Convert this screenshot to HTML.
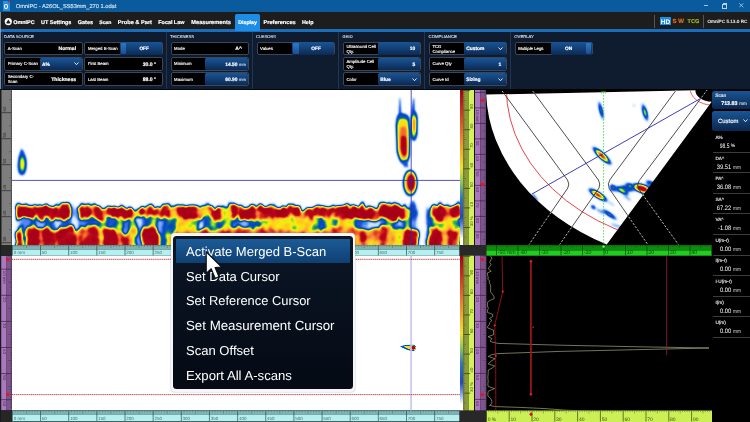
<!DOCTYPE html>
<html lang="en"><head><meta charset="utf-8"><title>OmniPC - A26OL_SS53mm_270 1.odat</title>
<style>
.t{position:absolute;white-space:nowrap;line-height:1;text-rendering:geometricPrecision;}
.f{position:absolute;background:#000;border:0.8px solid #3b4759;border-radius:2px;box-sizing:border-box}
.b{position:absolute;background:linear-gradient(#1a5596,#0b2a55);border-radius:1.5px}

html,body{margin:0;padding:0;background:#000;}
body{width:750px;height:422px;overflow:hidden;position:relative;font-family:"Liberation Sans",sans-serif;-webkit-font-smoothing:antialiased}
svg text{font-family:"Liberation Sans",sans-serif}
</style></head>
<body>
<svg style="position:absolute;left:0;top:0;text-rendering:geometricPrecision;will-change:transform" width="750" height="422" viewBox="0 0 750 422"><defs><filter id="cm1" x="0" y="190" width="480" height="70" filterUnits="userSpaceOnUse" color-interpolation-filters="sRGB"><feTurbulence type="fractalNoise" baseFrequency="0.28 0.02" numOctaves="2" seed="5" result="n"/><feColorMatrix in="n" type="matrix" values="0 0 0 0 0.5  0 1 0 0 0  0 0 1 0 0  0 0 0 0 1" result="ny"/><feDisplacementMap in="SourceGraphic" in2="ny" scale="11" xChannelSelector="R" yChannelSelector="G" result="d1"/><feTurbulence type="fractalNoise" baseFrequency="0.09 0.08" numOctaves="2" seed="23" result="nb"/><feDisplacementMap in="d1" in2="nb" scale="6" xChannelSelector="R" yChannelSelector="G"/><feGaussianBlur stdDeviation="1.55" result="bl"/><feTurbulence type="fractalNoise" baseFrequency="0.1 0.1" numOctaves="2" seed="11" result="n2"/><feColorMatrix in="n2" type="matrix" values="1 0 0 0 0  1 0 0 0 0  1 0 0 0 0  0 0 0 0 1" result="n2g"/><feComposite in="bl" in2="n2g" operator="arithmetic" k1="0.7" k2="0.68" k3="0" k4="0"/><feComponentTransfer><feFuncR type="table" tableValues="1.000 0.921 0.843 0.750 0.600 0.450 0.300 0.222 0.144 0.067 0.024 0.035 0.046 0.100 0.183 0.300 0.550 0.800 0.955 0.967 0.980 0.992 0.998 0.993 0.988 0.983 0.974 0.959 0.944 0.929 0.902 0.857 0.812 0.767 0.735 0.723 0.710 0.698 0.685 0.672 0.660"/><feFuncG type="table" tableValues="1.000 0.957 0.914 0.858 0.745 0.633 0.520 0.442 0.364 0.287 0.266 0.330 0.394 0.503 0.640 0.764 0.836 0.907 0.937 0.904 0.872 0.839 0.796 0.736 0.676 0.616 0.552 0.482 0.412 0.342 0.274 0.209 0.144 0.079 0.037 0.031 0.025 0.019 0.013 0.006 0.000"/><feFuncB type="table" tableValues="1.000 1.000 1.000 0.997 0.981 0.966 0.950 0.903 0.856 0.808 0.757 0.700 0.643 0.540 0.407 0.282 0.193 0.104 0.055 0.067 0.080 0.092 0.112 0.142 0.172 0.202 0.212 0.192 0.172 0.152 0.136 0.126 0.116 0.106 0.100 0.100 0.100 0.100 0.100 0.100 0.100"/></feComponentTransfer></filter><filter id="cm2" x="0" y="0" width="750" height="422" filterUnits="userSpaceOnUse" color-interpolation-filters="sRGB"><feGaussianBlur stdDeviation="1.2"/><feComponentTransfer><feFuncR type="table" tableValues="1.000 0.921 0.843 0.750 0.600 0.450 0.300 0.222 0.144 0.067 0.024 0.035 0.046 0.100 0.183 0.300 0.550 0.800 0.955 0.967 0.980 0.992 0.998 0.993 0.988 0.983 0.974 0.959 0.944 0.929 0.902 0.857 0.812 0.767 0.735 0.723 0.710 0.698 0.685 0.672 0.660"/><feFuncG type="table" tableValues="1.000 0.957 0.914 0.858 0.745 0.633 0.520 0.442 0.364 0.287 0.266 0.330 0.394 0.503 0.640 0.764 0.836 0.907 0.937 0.904 0.872 0.839 0.796 0.736 0.676 0.616 0.552 0.482 0.412 0.342 0.274 0.209 0.144 0.079 0.037 0.031 0.025 0.019 0.013 0.006 0.000"/><feFuncB type="table" tableValues="1.000 1.000 1.000 0.997 0.981 0.966 0.950 0.903 0.856 0.808 0.757 0.700 0.643 0.540 0.407 0.282 0.193 0.104 0.055 0.067 0.080 0.092 0.112 0.142 0.172 0.202 0.212 0.192 0.172 0.152 0.136 0.126 0.116 0.106 0.100 0.100 0.100 0.100 0.100 0.100 0.100"/></feComponentTransfer></filter><filter id="cm3" x="0" y="0" width="750" height="422" filterUnits="userSpaceOnUse" color-interpolation-filters="sRGB"><feGaussianBlur stdDeviation="0.8"/><feComponentTransfer><feFuncR type="table" tableValues="1.000 0.921 0.843 0.750 0.600 0.450 0.300 0.222 0.144 0.067 0.024 0.035 0.046 0.100 0.183 0.300 0.550 0.800 0.955 0.967 0.980 0.992 0.998 0.993 0.988 0.983 0.974 0.959 0.944 0.929 0.902 0.857 0.812 0.767 0.735 0.723 0.710 0.698 0.685 0.672 0.660"/><feFuncG type="table" tableValues="1.000 0.957 0.914 0.858 0.745 0.633 0.520 0.442 0.364 0.287 0.266 0.330 0.394 0.503 0.640 0.764 0.836 0.907 0.937 0.904 0.872 0.839 0.796 0.736 0.676 0.616 0.552 0.482 0.412 0.342 0.274 0.209 0.144 0.079 0.037 0.031 0.025 0.019 0.013 0.006 0.000"/><feFuncB type="table" tableValues="1.000 1.000 1.000 0.997 0.981 0.966 0.950 0.903 0.856 0.808 0.757 0.700 0.643 0.540 0.407 0.282 0.193 0.104 0.055 0.067 0.080 0.092 0.112 0.142 0.172 0.202 0.212 0.192 0.172 0.152 0.136 0.126 0.116 0.106 0.100 0.100 0.100 0.100 0.100 0.100 0.100"/></feComponentTransfer></filter><filter id="cm4" x="0" y="0" width="750" height="422" filterUnits="userSpaceOnUse" color-interpolation-filters="sRGB"><feGaussianBlur stdDeviation="0.55"/><feComponentTransfer><feFuncR type="table" tableValues="1.000 0.921 0.843 0.750 0.600 0.450 0.300 0.222 0.144 0.067 0.024 0.035 0.046 0.100 0.183 0.300 0.550 0.800 0.955 0.967 0.980 0.992 0.998 0.993 0.988 0.983 0.974 0.959 0.944 0.929 0.902 0.857 0.812 0.767 0.735 0.723 0.710 0.698 0.685 0.672 0.660"/><feFuncG type="table" tableValues="1.000 0.957 0.914 0.858 0.745 0.633 0.520 0.442 0.364 0.287 0.266 0.330 0.394 0.503 0.640 0.764 0.836 0.907 0.937 0.904 0.872 0.839 0.796 0.736 0.676 0.616 0.552 0.482 0.412 0.342 0.274 0.209 0.144 0.079 0.037 0.031 0.025 0.019 0.013 0.006 0.000"/><feFuncB type="table" tableValues="1.000 1.000 1.000 0.997 0.981 0.966 0.950 0.903 0.856 0.808 0.757 0.700 0.643 0.540 0.407 0.282 0.193 0.104 0.055 0.067 0.080 0.092 0.112 0.142 0.172 0.202 0.212 0.192 0.172 0.152 0.136 0.126 0.116 0.106 0.100 0.100 0.100 0.100 0.100 0.100 0.100"/></feComponentTransfer></filter><clipPath id="cpB"><rect x="12" y="90" width="448" height="155"/></clipPath><clipPath id="cpS"><path d="M486.2 94.6 L695.4 90.2 A16.3 11.5 0 0 0 711.7 101.7 L606.7 244.4 A226 175.4 0 0 1 486.2 94.6 Z"/></clipPath><clipPath id="cpSv"><rect x="486.4" y="90" width="225.6" height="155"/></clipPath><clipPath id="cpA"><rect x="486.4" y="255.7" width="225.6" height="154.7"/></clipPath><linearGradient id="cbar" x1="0" y1="0" x2="0" y2="1"><stop offset="0" stop-color="#a00018"/><stop offset="0.12" stop-color="#cf2a1c"/><stop offset="0.3" stop-color="#ee7c30"/><stop offset="0.5" stop-color="#f2e030"/><stop offset="0.6" stop-color="#86c464"/><stop offset="0.7" stop-color="#2e74c0"/><stop offset="0.82" stop-color="#2048c8"/><stop offset="0.9" stop-color="#8eacf0"/><stop offset="0.96" stop-color="#ffffff"/></linearGradient><clipPath id="cpC"><rect x="12" y="255.5" width="448" height="155"/></clipPath></defs><rect x="0" y="88.6" width="750" height="334" fill="#000"/><rect x="0" y="88.6" width="750" height="1.6" fill="#04080e"/><rect x="0" y="90" width="1" height="332" fill="#1a1a1a"/><rect x="12" y="90" width="448" height="154.6" fill="#fff"/><rect x="12" y="255.7" width="448" height="154.8" fill="#fff"/><rect x="1.4" y="90.0" width="10.3" height="155.0" fill="#7e7e7e"/><path d="M10.5 91.90H11.7M10.5 94.50H11.7M10.5 97.10H11.7M9.1 99.70H11.7M10.5 102.30H11.7M10.5 104.90H11.7M10.5 107.50H11.7M10.5 110.10H11.7M10.5 115.30H11.7M10.5 117.90H11.7M10.5 120.50H11.7M10.5 123.10H11.7M9.1 125.70H11.7M10.5 128.30H11.7M10.5 130.90H11.7M10.5 133.50H11.7M10.5 136.10H11.7M10.5 141.30H11.7M10.5 143.90H11.7M10.5 146.50H11.7M10.5 149.10H11.7M9.1 151.70H11.7M10.5 154.30H11.7M10.5 156.90H11.7M10.5 159.50H11.7M10.5 162.10H11.7M10.5 167.30H11.7M10.5 169.90H11.7M10.5 172.50H11.7M10.5 175.10H11.7M9.1 177.70H11.7M10.5 180.30H11.7M10.5 182.90H11.7M10.5 185.50H11.7M10.5 188.10H11.7M10.5 193.30H11.7M10.5 195.90H11.7M10.5 198.50H11.7M10.5 201.10H11.7M9.1 203.70H11.7M10.5 206.30H11.7M10.5 208.90H11.7M10.5 211.50H11.7M10.5 214.10H11.7M10.5 219.30H11.7M10.5 221.90H11.7M10.5 224.50H11.7M10.5 227.10H11.7M9.1 229.70H11.7M10.5 232.30H11.7M10.5 234.90H11.7M10.5 237.50H11.7M10.5 240.10H11.7" stroke="#262626" stroke-width="0.50" fill="none" opacity="0.8"/><path d="M1.7 112.70H11.4M1.7 138.70H11.4M1.7 164.70H11.4M1.7 190.70H11.4M1.7 216.70H11.4M1.7 242.70H11.4" stroke="#262626" stroke-width="0.70" fill="none"/><text x="6.0" y="111.5" font-size="4.3" fill="#3c2424" text-anchor="start" font-weight="400" transform="rotate(-90 6.0 111.5)">60</text><text x="6.0" y="137.5" font-size="4.3" fill="#3c2424" text-anchor="start" font-weight="400" transform="rotate(-90 6.0 137.5)">55</text><text x="6.0" y="163.5" font-size="4.3" fill="#3c2424" text-anchor="start" font-weight="400" transform="rotate(-90 6.0 163.5)">50</text><text x="6.0" y="189.5" font-size="4.3" fill="#3c2424" text-anchor="start" font-weight="400" transform="rotate(-90 6.0 189.5)">45</text><text x="6.0" y="215.5" font-size="4.3" fill="#3c2424" text-anchor="start" font-weight="400" transform="rotate(-90 6.0 215.5)">40</text><text x="6.0" y="241.5" font-size="4.3" fill="#3c2424" text-anchor="start" font-weight="400" transform="rotate(-90 6.0 241.5)">35</text><rect x="1.2" y="255.7" width="5.4" height="154.7" fill="#ab78bf"/><rect x="6.6" y="255.7" width="5.2" height="154.7" fill="#7d558c"/><path d="M8.6 256.15H11.8M10.2 258.76H11.8M10.2 261.37H11.8M10.2 263.98H11.8M10.2 266.59H11.8M10.2 271.81H11.8M10.2 274.42H11.8M10.2 277.03H11.8M10.2 279.64H11.8M8.6 282.25H11.8M10.2 284.86H11.8M10.2 287.47H11.8M10.2 290.08H11.8M10.2 292.69H11.8M10.2 297.91H11.8M10.2 300.52H11.8M10.2 303.13H11.8M10.2 305.74H11.8M8.6 308.35H11.8M10.2 310.96H11.8M10.2 313.57H11.8M10.2 316.18H11.8M10.2 318.79H11.8M10.2 324.01H11.8M10.2 326.62H11.8M10.2 329.23H11.8M10.2 331.84H11.8M8.6 334.45H11.8M10.2 337.06H11.8M10.2 339.67H11.8M10.2 342.28H11.8M10.2 344.89H11.8M10.2 350.11H11.8M10.2 352.72H11.8M10.2 355.33H11.8M10.2 357.94H11.8M8.6 360.55H11.8M10.2 363.16H11.8M10.2 365.77H11.8M10.2 368.38H11.8M10.2 370.99H11.8M10.2 376.21H11.8M10.2 378.82H11.8M10.2 381.43H11.8M10.2 384.04H11.8M8.6 386.65H11.8M10.2 389.26H11.8M10.2 391.87H11.8M10.2 394.48H11.8M10.2 397.09H11.8M10.2 402.31H11.8M10.2 404.92H11.8M10.2 407.53H11.8" stroke="#35203c" stroke-width="0.50" fill="none" opacity="0.8"/><path d="M1.2 269.20H11.8M1.2 295.30H11.8M1.2 321.40H11.8M1.2 347.50H11.8M1.2 373.60H11.8M1.2 399.70H11.8" stroke="#35203c" stroke-width="0.70" fill="none"/><text x="2.6" y="270.8" font-size="4.3" fill="#4a2c55" text-anchor="start" font-weight="400" transform="rotate(90 2.6 270.8)">10 mm</text><text x="2.6" y="296.9" font-size="4.3" fill="#4a2c55" text-anchor="start" font-weight="400" transform="rotate(90 2.6 296.9)">20</text><text x="2.6" y="323.0" font-size="4.3" fill="#4a2c55" text-anchor="start" font-weight="400" transform="rotate(90 2.6 323.0)">30</text><text x="2.6" y="349.1" font-size="4.3" fill="#4a2c55" text-anchor="start" font-weight="400" transform="rotate(90 2.6 349.1)">40</text><text x="2.6" y="375.2" font-size="4.3" fill="#4a2c55" text-anchor="start" font-weight="400" transform="rotate(90 2.6 375.2)">50</text><text x="2.6" y="401.3" font-size="4.3" fill="#4a2c55" text-anchor="start" font-weight="400" transform="rotate(90 2.6 401.3)">60</text><rect x="1" y="245" width="11" height="10.7" fill="#262626"/><rect x="1" y="410.4" width="11" height="11.6" fill="#262626"/><rect x="12.0" y="245.0" width="447.6" height="4.5" fill="#7fb4b4"/><rect x="12.0" y="249.5" width="447.6" height="6.2" fill="#b6efef"/><path d="M15.21 245.2V246.7M18.03 245.2V246.7M20.84 245.2V246.7M23.66 245.2V246.7M26.48 245.2V248.0M29.29 245.2V246.7M32.10 245.2V246.7M34.92 245.2V246.7M37.73 245.2V246.7M43.36 245.2V246.7M46.18 245.2V246.7M48.99 245.2V246.7M51.81 245.2V246.7M54.62 245.2V248.0M57.44 245.2V246.7M60.25 245.2V246.7M63.07 245.2V246.7M65.88 245.2V246.7M71.52 245.2V246.7M74.33 245.2V246.7M77.14 245.2V246.7M79.96 245.2V246.7M82.78 245.2V248.0M85.59 245.2V246.7M88.41 245.2V246.7M91.22 245.2V246.7M94.03 245.2V246.7M99.66 245.2V246.7M102.48 245.2V246.7M105.30 245.2V246.7M108.11 245.2V246.7M110.92 245.2V248.0M113.74 245.2V246.7M116.55 245.2V246.7M119.37 245.2V246.7M122.18 245.2V246.7M127.81 245.2V246.7M130.63 245.2V246.7M133.44 245.2V246.7M136.26 245.2V246.7M139.07 245.2V248.0M141.89 245.2V246.7M144.70 245.2V246.7M147.52 245.2V246.7M150.33 245.2V246.7M155.97 245.2V246.7M158.78 245.2V246.7M161.59 245.2V246.7M164.41 245.2V246.7M167.22 245.2V248.0M170.04 245.2V246.7M172.85 245.2V246.7M175.67 245.2V246.7M178.48 245.2V246.7M184.11 245.2V246.7M186.93 245.2V246.7M189.74 245.2V246.7M192.56 245.2V246.7M195.38 245.2V248.0M198.19 245.2V246.7M201.00 245.2V246.7M203.82 245.2V246.7M206.63 245.2V246.7M212.26 245.2V246.7M215.08 245.2V246.7M217.89 245.2V246.7M220.71 245.2V246.7M223.52 245.2V248.0M226.34 245.2V246.7M229.15 245.2V246.7M231.97 245.2V246.7M234.78 245.2V246.7M240.41 245.2V246.7M243.23 245.2V246.7M246.04 245.2V246.7M248.86 245.2V246.7M251.67 245.2V248.0M254.49 245.2V246.7M257.30 245.2V246.7M260.12 245.2V246.7M262.93 245.2V246.7M268.56 245.2V246.7M271.38 245.2V246.7M274.19 245.2V246.7M277.01 245.2V246.7M279.82 245.2V248.0M282.64 245.2V246.7M285.45 245.2V246.7M288.27 245.2V246.7M291.08 245.2V246.7M296.71 245.2V246.7M299.53 245.2V246.7M302.34 245.2V246.7M305.16 245.2V246.7M307.97 245.2V248.0M310.79 245.2V246.7M313.60 245.2V246.7M316.42 245.2V246.7M319.23 245.2V246.7M324.86 245.2V246.7M327.68 245.2V246.7M330.49 245.2V246.7M333.31 245.2V246.7M336.12 245.2V248.0M338.94 245.2V246.7M341.75 245.2V246.7M344.57 245.2V246.7M347.38 245.2V246.7M353.01 245.2V246.7M355.83 245.2V246.7M358.64 245.2V246.7M361.46 245.2V246.7M364.27 245.2V248.0M367.09 245.2V246.7M369.90 245.2V246.7M372.72 245.2V246.7M375.53 245.2V246.7M381.16 245.2V246.7M383.98 245.2V246.7M386.79 245.2V246.7M389.61 245.2V246.7M392.42 245.2V248.0M395.24 245.2V246.7M398.05 245.2V246.7M400.87 245.2V246.7M403.68 245.2V246.7M409.31 245.2V246.7M412.13 245.2V246.7M414.94 245.2V246.7M417.76 245.2V246.7M420.57 245.2V248.0M423.39 245.2V246.7M426.20 245.2V246.7M429.02 245.2V246.7M431.83 245.2V246.7M437.46 245.2V246.7M440.28 245.2V246.7M443.09 245.2V246.7M445.91 245.2V246.7M448.72 245.2V248.0M451.54 245.2V246.7M454.35 245.2V246.7M457.17 245.2V246.7" stroke="#1f4444" stroke-width="0.50" fill="none" opacity="0.75"/><path d="M12.40 245.2V255.3M40.55 245.2V255.3M68.70 245.2V255.3M96.85 245.2V255.3M125.00 245.2V255.3M153.15 245.2V255.3M181.30 245.2V255.3M209.45 245.2V255.3M237.60 245.2V255.3M265.75 245.2V255.3M293.90 245.2V255.3M322.05 245.2V255.3M350.20 245.2V255.3M378.35 245.2V255.3M406.50 245.2V255.3M434.65 245.2V255.3" stroke="#1f4444" stroke-width="0.65" fill="none"/><path d="M12.0 245.2H459.6" stroke="#1f4444" stroke-width="0.5" opacity="0.7"/><text x="13.7" y="254.3" font-size="4.5" fill="#3e7474" text-anchor="start" font-weight="400">0 mm</text><text x="41.8" y="254.3" font-size="4.5" fill="#3e7474" text-anchor="start" font-weight="400">50</text><text x="70.0" y="254.3" font-size="4.5" fill="#3e7474" text-anchor="start" font-weight="400">100</text><text x="98.1" y="254.3" font-size="4.5" fill="#3e7474" text-anchor="start" font-weight="400">150</text><text x="126.3" y="254.3" font-size="4.5" fill="#3e7474" text-anchor="start" font-weight="400">200</text><text x="154.5" y="254.3" font-size="4.5" fill="#3e7474" text-anchor="start" font-weight="400">250</text><text x="182.6" y="254.3" font-size="4.5" fill="#3e7474" text-anchor="start" font-weight="400">300</text><text x="210.8" y="254.3" font-size="4.5" fill="#3e7474" text-anchor="start" font-weight="400">350</text><text x="238.9" y="254.3" font-size="4.5" fill="#3e7474" text-anchor="start" font-weight="400">400</text><text x="267.0" y="254.3" font-size="4.5" fill="#3e7474" text-anchor="start" font-weight="400">450</text><text x="295.2" y="254.3" font-size="4.5" fill="#3e7474" text-anchor="start" font-weight="400">500</text><text x="323.3" y="254.3" font-size="4.5" fill="#3e7474" text-anchor="start" font-weight="400">550</text><text x="351.5" y="254.3" font-size="4.5" fill="#3e7474" text-anchor="start" font-weight="400">600</text><text x="379.6" y="254.3" font-size="4.5" fill="#3e7474" text-anchor="start" font-weight="400">650</text><text x="407.8" y="254.3" font-size="4.5" fill="#3e7474" text-anchor="start" font-weight="400">700</text><text x="435.9" y="254.3" font-size="4.5" fill="#3e7474" text-anchor="start" font-weight="400">750</text><rect x="459.6" y="245.0" width="26.8" height="11.3" fill="#282828"/><rect x="12.0" y="410.4" width="447.6" height="4.5" fill="#7fb4b4"/><rect x="12.0" y="414.9" width="447.6" height="6.5" fill="#b6efef"/><path d="M15.21 410.6V412.1M18.03 410.6V412.1M20.84 410.6V412.1M23.66 410.6V412.1M26.48 410.6V413.4M29.29 410.6V412.1M32.10 410.6V412.1M34.92 410.6V412.1M37.73 410.6V412.1M43.36 410.6V412.1M46.18 410.6V412.1M48.99 410.6V412.1M51.81 410.6V412.1M54.62 410.6V413.4M57.44 410.6V412.1M60.25 410.6V412.1M63.07 410.6V412.1M65.88 410.6V412.1M71.52 410.6V412.1M74.33 410.6V412.1M77.14 410.6V412.1M79.96 410.6V412.1M82.78 410.6V413.4M85.59 410.6V412.1M88.41 410.6V412.1M91.22 410.6V412.1M94.03 410.6V412.1M99.66 410.6V412.1M102.48 410.6V412.1M105.30 410.6V412.1M108.11 410.6V412.1M110.92 410.6V413.4M113.74 410.6V412.1M116.55 410.6V412.1M119.37 410.6V412.1M122.18 410.6V412.1M127.81 410.6V412.1M130.63 410.6V412.1M133.44 410.6V412.1M136.26 410.6V412.1M139.07 410.6V413.4M141.89 410.6V412.1M144.70 410.6V412.1M147.52 410.6V412.1M150.33 410.6V412.1M155.97 410.6V412.1M158.78 410.6V412.1M161.59 410.6V412.1M164.41 410.6V412.1M167.22 410.6V413.4M170.04 410.6V412.1M172.85 410.6V412.1M175.67 410.6V412.1M178.48 410.6V412.1M184.11 410.6V412.1M186.93 410.6V412.1M189.74 410.6V412.1M192.56 410.6V412.1M195.38 410.6V413.4M198.19 410.6V412.1M201.00 410.6V412.1M203.82 410.6V412.1M206.63 410.6V412.1M212.26 410.6V412.1M215.08 410.6V412.1M217.89 410.6V412.1M220.71 410.6V412.1M223.52 410.6V413.4M226.34 410.6V412.1M229.15 410.6V412.1M231.97 410.6V412.1M234.78 410.6V412.1M240.41 410.6V412.1M243.23 410.6V412.1M246.04 410.6V412.1M248.86 410.6V412.1M251.67 410.6V413.4M254.49 410.6V412.1M257.30 410.6V412.1M260.12 410.6V412.1M262.93 410.6V412.1M268.56 410.6V412.1M271.38 410.6V412.1M274.19 410.6V412.1M277.01 410.6V412.1M279.82 410.6V413.4M282.64 410.6V412.1M285.45 410.6V412.1M288.27 410.6V412.1M291.08 410.6V412.1M296.71 410.6V412.1M299.53 410.6V412.1M302.34 410.6V412.1M305.16 410.6V412.1M307.97 410.6V413.4M310.79 410.6V412.1M313.60 410.6V412.1M316.42 410.6V412.1M319.23 410.6V412.1M324.86 410.6V412.1M327.68 410.6V412.1M330.49 410.6V412.1M333.31 410.6V412.1M336.12 410.6V413.4M338.94 410.6V412.1M341.75 410.6V412.1M344.57 410.6V412.1M347.38 410.6V412.1M353.01 410.6V412.1M355.83 410.6V412.1M358.64 410.6V412.1M361.46 410.6V412.1M364.27 410.6V413.4M367.09 410.6V412.1M369.90 410.6V412.1M372.72 410.6V412.1M375.53 410.6V412.1M381.16 410.6V412.1M383.98 410.6V412.1M386.79 410.6V412.1M389.61 410.6V412.1M392.42 410.6V413.4M395.24 410.6V412.1M398.05 410.6V412.1M400.87 410.6V412.1M403.68 410.6V412.1M409.31 410.6V412.1M412.13 410.6V412.1M414.94 410.6V412.1M417.76 410.6V412.1M420.57 410.6V413.4M423.39 410.6V412.1M426.20 410.6V412.1M429.02 410.6V412.1M431.83 410.6V412.1M437.46 410.6V412.1M440.28 410.6V412.1M443.09 410.6V412.1M445.91 410.6V412.1M448.72 410.6V413.4M451.54 410.6V412.1M454.35 410.6V412.1M457.17 410.6V412.1" stroke="#1f4444" stroke-width="0.50" fill="none" opacity="0.75"/><path d="M12.40 410.6V421.0M40.55 410.6V421.0M68.70 410.6V421.0M96.85 410.6V421.0M125.00 410.6V421.0M153.15 410.6V421.0M181.30 410.6V421.0M209.45 410.6V421.0M237.60 410.6V421.0M265.75 410.6V421.0M293.90 410.6V421.0M322.05 410.6V421.0M350.20 410.6V421.0M378.35 410.6V421.0M406.50 410.6V421.0M434.65 410.6V421.0" stroke="#1f4444" stroke-width="0.65" fill="none"/><path d="M12.0 410.6H459.6" stroke="#1f4444" stroke-width="0.5" opacity="0.7"/><text x="13.7" y="420.0" font-size="4.5" fill="#3e7474" text-anchor="start" font-weight="400">0 mm</text><text x="41.8" y="420.0" font-size="4.5" fill="#3e7474" text-anchor="start" font-weight="400">50</text><text x="70.0" y="420.0" font-size="4.5" fill="#3e7474" text-anchor="start" font-weight="400">100</text><text x="98.1" y="420.0" font-size="4.5" fill="#3e7474" text-anchor="start" font-weight="400">150</text><text x="126.3" y="420.0" font-size="4.5" fill="#3e7474" text-anchor="start" font-weight="400">200</text><text x="154.5" y="420.0" font-size="4.5" fill="#3e7474" text-anchor="start" font-weight="400">250</text><text x="182.6" y="420.0" font-size="4.5" fill="#3e7474" text-anchor="start" font-weight="400">300</text><text x="210.8" y="420.0" font-size="4.5" fill="#3e7474" text-anchor="start" font-weight="400">350</text><text x="238.9" y="420.0" font-size="4.5" fill="#3e7474" text-anchor="start" font-weight="400">400</text><text x="267.0" y="420.0" font-size="4.5" fill="#3e7474" text-anchor="start" font-weight="400">450</text><text x="295.2" y="420.0" font-size="4.5" fill="#3e7474" text-anchor="start" font-weight="400">500</text><text x="323.3" y="420.0" font-size="4.5" fill="#3e7474" text-anchor="start" font-weight="400">550</text><text x="351.5" y="420.0" font-size="4.5" fill="#3e7474" text-anchor="start" font-weight="400">600</text><text x="379.6" y="420.0" font-size="4.5" fill="#3e7474" text-anchor="start" font-weight="400">650</text><text x="407.8" y="420.0" font-size="4.5" fill="#3e7474" text-anchor="start" font-weight="400">700</text><text x="435.9" y="420.0" font-size="4.5" fill="#3e7474" text-anchor="start" font-weight="400">750</text><rect x="459.6" y="410.4" width="26.8" height="11.6" fill="#282828"/><rect x="460" y="90.0" width="3.4" height="155.0" fill="url(#cbar)"/><rect x="463.2" y="90.0" width="5.5" height="155.0" fill="#8b9a3a"/><rect x="468.7" y="90.0" width="5.4" height="155.0" fill="#d5f15c"/><path d="M463.2 92.55H464.6M463.2 94.51H464.6M463.2 96.46H464.6M463.2 98.42H464.6M463.2 100.38H465.8M463.2 102.33H464.6M463.2 104.28H464.6M463.2 106.24H464.6M463.2 108.19H464.6M463.2 112.10H464.6M463.2 114.06H464.6M463.2 116.01H464.6M463.2 117.97H464.6M463.2 119.92H465.8M463.2 121.88H464.6M463.2 123.83H464.6M463.2 125.79H464.6M463.2 127.75H464.6M463.2 131.66H464.6M463.2 133.61H464.6M463.2 135.56H464.6M463.2 137.52H464.6M463.2 139.47H465.8M463.2 141.43H464.6M463.2 143.38H464.6M463.2 145.34H464.6M463.2 147.29H464.6M463.2 151.20H464.6M463.2 153.16H464.6M463.2 155.12H464.6M463.2 157.07H464.6M463.2 159.02H465.8M463.2 160.98H464.6M463.2 162.94H464.6M463.2 164.89H464.6M463.2 166.84H464.6M463.2 170.75H464.6M463.2 172.71H464.6M463.2 174.66H464.6M463.2 176.62H464.6M463.2 178.57H465.8M463.2 180.53H464.6M463.2 182.49H464.6M463.2 184.44H464.6M463.2 186.39H464.6M463.2 190.31H464.6M463.2 192.26H464.6M463.2 194.22H464.6M463.2 196.17H464.6M463.2 198.12H465.8M463.2 200.08H464.6M463.2 202.03H464.6M463.2 203.99H464.6M463.2 205.94H464.6M463.2 209.86H464.6M463.2 211.81H464.6M463.2 213.76H464.6M463.2 215.72H464.6M463.2 217.68H465.8M463.2 219.63H464.6M463.2 221.59H464.6M463.2 223.54H464.6M463.2 225.50H464.6M463.2 229.41H464.6M463.2 231.36H464.6M463.2 233.31H464.6M463.2 235.27H464.6M463.2 237.22H465.8M463.2 239.18H464.6M463.2 241.13H464.6M463.2 243.09H464.6" stroke="#2c3312" stroke-width="0.50" fill="none" opacity="0.8"/><path d="M463.2 90.60H470.2M463.2 110.15H470.2M463.2 129.70H470.2M463.2 149.25H470.2M463.2 168.80H470.2M463.2 188.35H470.2M463.2 207.90H470.2M463.2 227.45H470.2" stroke="#2c3312" stroke-width="0.70" fill="none"/><text x="473.0" y="108.9" font-size="4.3" fill="#46521c" text-anchor="start" font-weight="400" transform="rotate(-90 473.0 108.9)">90</text><text x="473.0" y="128.5" font-size="4.3" fill="#46521c" text-anchor="start" font-weight="400" transform="rotate(-90 473.0 128.5)">80</text><text x="473.0" y="148.1" font-size="4.3" fill="#46521c" text-anchor="start" font-weight="400" transform="rotate(-90 473.0 148.1)">70</text><text x="473.0" y="167.6" font-size="4.3" fill="#46521c" text-anchor="start" font-weight="400" transform="rotate(-90 473.0 167.6)">60</text><text x="473.0" y="187.2" font-size="4.3" fill="#46521c" text-anchor="start" font-weight="400" transform="rotate(-90 473.0 187.2)">50</text><text x="473.0" y="206.7" font-size="4.3" fill="#46521c" text-anchor="start" font-weight="400" transform="rotate(-90 473.0 206.7)">40</text><text x="473.0" y="226.2" font-size="4.3" fill="#46521c" text-anchor="start" font-weight="400" transform="rotate(-90 473.0 226.2)">30 %</text><rect x="474.1" y="90.0" width="0.9" height="155.0" fill="#151515"/><rect x="475.0" y="90.0" width="5.2" height="155.0" fill="#ab78bf"/><rect x="480.2" y="90.0" width="6.1" height="155.0" fill="#7d558c"/><path d="M484.7 90.85H486.3M484.7 93.95H486.3M484.7 95.50H486.3M484.7 97.05H486.3M484.7 98.60H486.3M483.3 100.15H486.3M484.7 101.70H486.3M484.7 103.25H486.3M484.7 104.80H486.3M484.7 106.35H486.3M484.7 109.45H486.3M484.7 111.00H486.3M484.7 112.55H486.3M484.7 114.10H486.3M483.3 115.65H486.3M484.7 117.20H486.3M484.7 118.75H486.3M484.7 120.30H486.3M484.7 121.85H486.3M484.7 124.95H486.3M484.7 126.50H486.3M484.7 128.05H486.3M484.7 129.60H486.3M483.3 131.15H486.3M484.7 132.70H486.3M484.7 134.25H486.3M484.7 135.80H486.3M484.7 137.35H486.3M484.7 140.45H486.3M484.7 142.00H486.3M484.7 143.55H486.3M484.7 145.10H486.3M483.3 146.65H486.3M484.7 148.20H486.3M484.7 149.75H486.3M484.7 151.30H486.3M484.7 152.85H486.3M484.7 155.95H486.3M484.7 157.50H486.3M484.7 159.05H486.3M484.7 160.60H486.3M483.3 162.15H486.3M484.7 163.70H486.3M484.7 165.25H486.3M484.7 166.80H486.3M484.7 168.35H486.3M484.7 171.45H486.3M484.7 173.00H486.3M484.7 174.55H486.3M484.7 176.10H486.3M483.3 177.65H486.3M484.7 179.20H486.3M484.7 180.75H486.3M484.7 182.30H486.3M484.7 183.85H486.3M484.7 186.95H486.3M484.7 188.50H486.3M484.7 190.05H486.3M484.7 191.60H486.3M483.3 193.15H486.3M484.7 194.70H486.3M484.7 196.25H486.3M484.7 197.80H486.3M484.7 199.35H486.3M484.7 202.45H486.3M484.7 204.00H486.3M484.7 205.55H486.3M484.7 207.10H486.3M483.3 208.65H486.3M484.7 210.20H486.3M484.7 211.75H486.3M484.7 213.30H486.3M484.7 214.85H486.3M484.7 217.95H486.3M484.7 219.50H486.3M484.7 221.05H486.3M484.7 222.60H486.3M483.3 224.15H486.3M484.7 225.70H486.3M484.7 227.25H486.3M484.7 228.80H486.3M484.7 230.35H486.3M484.7 233.45H486.3M484.7 235.00H486.3M484.7 236.55H486.3M484.7 238.10H486.3M483.3 239.65H486.3M484.7 241.20H486.3M484.7 242.75H486.3M484.7 244.30H486.3" stroke="#35203c" stroke-width="0.50" fill="none" opacity="0.8"/><path d="M475.0 92.40H486.3M475.0 107.90H486.3M475.0 123.40H486.3M475.0 138.90H486.3M475.0 154.40H486.3M475.0 169.90H486.3M475.0 185.40H486.3M475.0 200.90H486.3M475.0 216.40H486.3M475.0 231.90H486.3" stroke="#35203c" stroke-width="0.70" fill="none"/><text x="476.2" y="109.5" font-size="4.3" fill="#4a2c55" text-anchor="start" font-weight="400" transform="rotate(90 476.2 109.5)">10 mm</text><text x="476.2" y="140.5" font-size="4.3" fill="#4a2c55" text-anchor="start" font-weight="400" transform="rotate(90 476.2 140.5)">30</text><text x="476.2" y="156.0" font-size="4.3" fill="#4a2c55" text-anchor="start" font-weight="400" transform="rotate(90 476.2 156.0)">40</text><text x="476.2" y="171.5" font-size="4.3" fill="#4a2c55" text-anchor="start" font-weight="400" transform="rotate(90 476.2 171.5)">50</text><text x="476.2" y="187.0" font-size="4.3" fill="#4a2c55" text-anchor="start" font-weight="400" transform="rotate(90 476.2 187.0)">60</text><text x="476.2" y="202.5" font-size="4.3" fill="#4a2c55" text-anchor="start" font-weight="400" transform="rotate(90 476.2 202.5)">70</text><text x="476.2" y="218.0" font-size="4.3" fill="#4a2c55" text-anchor="start" font-weight="400" transform="rotate(90 476.2 218.0)">80</text><text x="476.2" y="233.5" font-size="4.3" fill="#4a2c55" text-anchor="start" font-weight="400" transform="rotate(90 476.2 233.5)">90</text><rect x="460" y="255.7" width="3.4" height="154.7" fill="url(#cbar)"/><rect x="463.2" y="255.7" width="5.5" height="154.7" fill="#8b9a3a"/><rect x="468.7" y="255.7" width="5.4" height="154.7" fill="#d5f15c"/><path d="M463.2 258.25H464.6M463.2 260.21H464.6M463.2 262.17H464.6M463.2 264.12H464.6M463.2 266.07H465.8M463.2 268.03H464.6M463.2 269.99H464.6M463.2 271.94H464.6M463.2 273.89H464.6M463.2 277.81H464.6M463.2 279.76H464.6M463.2 281.72H464.6M463.2 283.67H464.6M463.2 285.62H465.8M463.2 287.58H464.6M463.2 289.54H464.6M463.2 291.49H464.6M463.2 293.44H464.6M463.2 297.36H464.6M463.2 299.31H464.6M463.2 301.26H464.6M463.2 303.22H464.6M463.2 305.18H465.8M463.2 307.13H464.6M463.2 309.09H464.6M463.2 311.04H464.6M463.2 313.00H464.6M463.2 316.91H464.6M463.2 318.86H464.6M463.2 320.81H464.6M463.2 322.77H464.6M463.2 324.73H465.8M463.2 326.68H464.6M463.2 328.63H464.6M463.2 330.59H464.6M463.2 332.55H464.6M463.2 336.46H464.6M463.2 338.41H464.6M463.2 340.37H464.6M463.2 342.32H464.6M463.2 344.28H465.8M463.2 346.23H464.6M463.2 348.19H464.6M463.2 350.14H464.6M463.2 352.10H464.6M463.2 356.00H464.6M463.2 357.96H464.6M463.2 359.92H464.6M463.2 361.87H464.6M463.2 363.83H465.8M463.2 365.78H464.6M463.2 367.74H464.6M463.2 369.69H464.6M463.2 371.64H464.6M463.2 375.56H464.6M463.2 377.51H464.6M463.2 379.47H464.6M463.2 381.42H464.6M463.2 383.38H465.8M463.2 385.33H464.6M463.2 387.29H464.6M463.2 389.24H464.6M463.2 391.20H464.6M463.2 395.11H464.6M463.2 397.06H464.6M463.2 399.01H464.6M463.2 400.97H464.6M463.2 402.93H465.8M463.2 404.88H464.6M463.2 406.84H464.6M463.2 408.79H464.6" stroke="#2c3312" stroke-width="0.50" fill="none" opacity="0.8"/><path d="M463.2 256.30H470.2M463.2 275.85H470.2M463.2 295.40H470.2M463.2 314.95H470.2M463.2 334.50H470.2M463.2 354.05H470.2M463.2 373.60H470.2M463.2 393.15H470.2" stroke="#2c3312" stroke-width="0.70" fill="none"/><text x="473.0" y="274.7" font-size="4.3" fill="#46521c" text-anchor="start" font-weight="400" transform="rotate(-90 473.0 274.7)">90</text><text x="473.0" y="294.2" font-size="4.3" fill="#46521c" text-anchor="start" font-weight="400" transform="rotate(-90 473.0 294.2)">80</text><text x="473.0" y="313.8" font-size="4.3" fill="#46521c" text-anchor="start" font-weight="400" transform="rotate(-90 473.0 313.8)">70</text><text x="473.0" y="333.3" font-size="4.3" fill="#46521c" text-anchor="start" font-weight="400" transform="rotate(-90 473.0 333.3)">60</text><text x="473.0" y="352.9" font-size="4.3" fill="#46521c" text-anchor="start" font-weight="400" transform="rotate(-90 473.0 352.9)">50</text><text x="473.0" y="372.4" font-size="4.3" fill="#46521c" text-anchor="start" font-weight="400" transform="rotate(-90 473.0 372.4)">40</text><text x="473.0" y="391.9" font-size="4.3" fill="#46521c" text-anchor="start" font-weight="400" transform="rotate(-90 473.0 391.9)">30 %</text><rect x="474.1" y="255.7" width="0.9" height="154.7" fill="#151515"/><rect x="475.0" y="255.7" width="5.2" height="154.7" fill="#ab78bf"/><rect x="480.2" y="255.7" width="6.1" height="154.7" fill="#7d558c"/><path d="M483.3 256.40H486.3M484.7 259.00H486.3M484.7 261.60H486.3M484.7 264.20H486.3M484.7 266.80H486.3M484.7 272.00H486.3M484.7 274.60H486.3M484.7 277.20H486.3M484.7 279.80H486.3M483.3 282.40H486.3M484.7 285.00H486.3M484.7 287.60H486.3M484.7 290.20H486.3M484.7 292.80H486.3M484.7 298.00H486.3M484.7 300.60H486.3M484.7 303.20H486.3M484.7 305.80H486.3M483.3 308.40H486.3M484.7 311.00H486.3M484.7 313.60H486.3M484.7 316.20H486.3M484.7 318.80H486.3M484.7 324.00H486.3M484.7 326.60H486.3M484.7 329.20H486.3M484.7 331.80H486.3M483.3 334.40H486.3M484.7 337.00H486.3M484.7 339.60H486.3M484.7 342.20H486.3M484.7 344.80H486.3M484.7 350.00H486.3M484.7 352.60H486.3M484.7 355.20H486.3M484.7 357.80H486.3M483.3 360.40H486.3M484.7 363.00H486.3M484.7 365.60H486.3M484.7 368.20H486.3M484.7 370.80H486.3M484.7 376.00H486.3M484.7 378.60H486.3M484.7 381.20H486.3M484.7 383.80H486.3M483.3 386.40H486.3M484.7 389.00H486.3M484.7 391.60H486.3M484.7 394.20H486.3M484.7 396.80H486.3M484.7 402.00H486.3M484.7 404.60H486.3M484.7 407.20H486.3M484.7 409.80H486.3" stroke="#35203c" stroke-width="0.50" fill="none" opacity="0.8"/><path d="M475.0 269.40H486.3M475.0 295.40H486.3M475.0 321.40H486.3M475.0 347.40H486.3M475.0 373.40H486.3M475.0 399.40H486.3" stroke="#35203c" stroke-width="0.70" fill="none"/><text x="476.2" y="271.0" font-size="4.3" fill="#4a2c55" text-anchor="start" font-weight="400" transform="rotate(90 476.2 271.0)">10 mm</text><text x="476.2" y="297.0" font-size="4.3" fill="#4a2c55" text-anchor="start" font-weight="400" transform="rotate(90 476.2 297.0)">20</text><text x="476.2" y="323.0" font-size="4.3" fill="#4a2c55" text-anchor="start" font-weight="400" transform="rotate(90 476.2 323.0)">30</text><text x="476.2" y="349.0" font-size="4.3" fill="#4a2c55" text-anchor="start" font-weight="400" transform="rotate(90 476.2 349.0)">40</text><text x="476.2" y="375.0" font-size="4.3" fill="#4a2c55" text-anchor="start" font-weight="400" transform="rotate(90 476.2 375.0)">50</text><text x="476.2" y="401.0" font-size="4.3" fill="#4a2c55" text-anchor="start" font-weight="400" transform="rotate(90 476.2 401.0)">60</text><rect x="486.4" y="245.0" width="225.6" height="5.4" fill="#0e8c0e"/><rect x="486.4" y="250.4" width="225.6" height="5.3" fill="#22cc22"/><path d="M487.90 245.2V246.7M490.05 245.2V246.7M492.20 245.2V246.7M494.35 245.2V246.7M498.65 245.2V246.7M500.80 245.2V246.7M502.95 245.2V246.7M505.10 245.2V246.7M507.25 245.2V248.0M509.40 245.2V246.7M511.55 245.2V246.7M513.70 245.2V246.7M515.85 245.2V246.7M520.15 245.2V246.7M522.30 245.2V246.7M524.45 245.2V246.7M526.60 245.2V246.7M528.75 245.2V248.0M530.90 245.2V246.7M533.05 245.2V246.7M535.20 245.2V246.7M537.35 245.2V246.7M541.65 245.2V246.7M543.80 245.2V246.7M545.95 245.2V246.7M548.10 245.2V246.7M550.25 245.2V248.0M552.40 245.2V246.7M554.55 245.2V246.7M556.70 245.2V246.7M558.85 245.2V246.7M563.15 245.2V246.7M565.30 245.2V246.7M567.45 245.2V246.7M569.60 245.2V246.7M571.75 245.2V248.0M573.90 245.2V246.7M576.05 245.2V246.7M578.20 245.2V246.7M580.35 245.2V246.7M584.65 245.2V246.7M586.80 245.2V246.7M588.95 245.2V246.7M591.10 245.2V246.7M593.25 245.2V248.0M595.40 245.2V246.7M597.55 245.2V246.7M599.70 245.2V246.7M601.85 245.2V246.7M606.15 245.2V246.7M608.30 245.2V246.7M610.45 245.2V246.7M612.60 245.2V246.7M614.75 245.2V248.0M616.90 245.2V246.7M619.05 245.2V246.7M621.20 245.2V246.7M623.35 245.2V246.7M627.65 245.2V246.7M629.80 245.2V246.7M631.95 245.2V246.7M634.10 245.2V246.7M636.25 245.2V248.0M638.40 245.2V246.7M640.55 245.2V246.7M642.70 245.2V246.7M644.85 245.2V246.7M649.15 245.2V246.7M651.30 245.2V246.7M653.45 245.2V246.7M655.60 245.2V246.7M657.75 245.2V248.0M659.90 245.2V246.7M662.05 245.2V246.7M664.20 245.2V246.7M666.35 245.2V246.7M670.65 245.2V246.7M672.80 245.2V246.7M674.95 245.2V246.7M677.10 245.2V246.7M679.25 245.2V248.0M681.40 245.2V246.7M683.55 245.2V246.7M685.70 245.2V246.7M687.85 245.2V246.7M692.15 245.2V246.7M694.30 245.2V246.7M696.45 245.2V246.7M698.60 245.2V246.7M700.75 245.2V248.0M702.90 245.2V246.7M705.05 245.2V246.7M707.20 245.2V246.7M709.35 245.2V246.7" stroke="#053c05" stroke-width="0.50" fill="none" opacity="0.75"/><path d="M496.50 245.2V255.3M518.00 245.2V255.3M539.50 245.2V255.3M561.00 245.2V255.3M582.50 245.2V255.3M604.00 245.2V255.3M625.50 245.2V255.3M647.00 245.2V255.3M668.50 245.2V255.3M690.00 245.2V255.3M711.50 245.2V255.3" stroke="#053c05" stroke-width="0.65" fill="none"/><path d="M486.4 245.2H712.0" stroke="#053c05" stroke-width="0.5" opacity="0.7"/><text x="497.8" y="254.3" font-size="5.3" fill="#064a06" text-anchor="start" font-weight="400">-50 mm</text><text x="519.3" y="254.3" font-size="5.3" fill="#064a06" text-anchor="start" font-weight="400">-40</text><text x="540.8" y="254.3" font-size="5.3" fill="#064a06" text-anchor="start" font-weight="400">-30</text><text x="562.3" y="254.3" font-size="5.3" fill="#064a06" text-anchor="start" font-weight="400">-20</text><text x="583.8" y="254.3" font-size="5.3" fill="#064a06" text-anchor="start" font-weight="400">-10</text><text x="605.3" y="254.3" font-size="5.3" fill="#064a06" text-anchor="start" font-weight="400">0</text><text x="626.8" y="254.3" font-size="5.3" fill="#064a06" text-anchor="start" font-weight="400">10</text><text x="648.3" y="254.3" font-size="5.3" fill="#064a06" text-anchor="start" font-weight="400">20</text><text x="669.8" y="254.3" font-size="5.3" fill="#064a06" text-anchor="start" font-weight="400">30</text><text x="691.3" y="254.3" font-size="5.3" fill="#064a06" text-anchor="start" font-weight="400">40</text><rect x="486.4" y="410.4" width="225.6" height="5.6" fill="#cbef55"/><rect x="486.4" y="416.0" width="225.6" height="6.0" fill="#cbef55"/><path d="M488.68 410.6V412.1M490.96 410.6V412.1M493.24 410.6V412.1M495.52 410.6V412.1M497.80 410.6V413.4M500.08 410.6V412.1M502.36 410.6V412.1M504.64 410.6V412.1M506.92 410.6V412.1M511.48 410.6V412.1M513.76 410.6V412.1M516.04 410.6V412.1M518.32 410.6V412.1M520.60 410.6V413.4M522.88 410.6V412.1M525.16 410.6V412.1M527.44 410.6V412.1M529.72 410.6V412.1M534.28 410.6V412.1M536.56 410.6V412.1M538.84 410.6V412.1M541.12 410.6V412.1M543.40 410.6V413.4M545.68 410.6V412.1M547.96 410.6V412.1M550.24 410.6V412.1M552.52 410.6V412.1M557.08 410.6V412.1M559.36 410.6V412.1M561.64 410.6V412.1M563.92 410.6V412.1M566.20 410.6V413.4M568.48 410.6V412.1M570.76 410.6V412.1M573.04 410.6V412.1M575.32 410.6V412.1M579.88 410.6V412.1M582.16 410.6V412.1M584.44 410.6V412.1M586.72 410.6V412.1M589.00 410.6V413.4M591.28 410.6V412.1M593.56 410.6V412.1M595.84 410.6V412.1M598.12 410.6V412.1M602.68 410.6V412.1M604.96 410.6V412.1M607.24 410.6V412.1M609.52 410.6V412.1M611.80 410.6V413.4M614.08 410.6V412.1M616.36 410.6V412.1M618.64 410.6V412.1M620.92 410.6V412.1M625.48 410.6V412.1M627.76 410.6V412.1M630.04 410.6V412.1M632.32 410.6V412.1M634.60 410.6V413.4M636.88 410.6V412.1M639.16 410.6V412.1M641.44 410.6V412.1M643.72 410.6V412.1M648.28 410.6V412.1M650.56 410.6V412.1M652.84 410.6V412.1M655.12 410.6V412.1M657.40 410.6V413.4M659.68 410.6V412.1M661.96 410.6V412.1M664.24 410.6V412.1M666.52 410.6V412.1M671.08 410.6V412.1M673.36 410.6V412.1M675.64 410.6V412.1M677.92 410.6V412.1M680.20 410.6V413.4M682.48 410.6V412.1M684.76 410.6V412.1M687.04 410.6V412.1M689.32 410.6V412.1M693.88 410.6V412.1M696.16 410.6V412.1M698.44 410.6V412.1M700.72 410.6V412.1M703.00 410.6V413.4M705.28 410.6V412.1M707.56 410.6V412.1M709.84 410.6V412.1" stroke="#2c3410" stroke-width="0.50" fill="none" opacity="0.75"/><path d="M486.40 410.6V421.6M509.20 410.6V421.6M532.00 410.6V421.6M554.80 410.6V421.6M577.60 410.6V421.6M600.40 410.6V421.6M623.20 410.6V421.6M646.00 410.6V421.6M668.80 410.6V421.6M691.60 410.6V421.6" stroke="#2c3410" stroke-width="0.65" fill="none"/><path d="M486.4 410.6H712.0" stroke="#2c3410" stroke-width="0.5" opacity="0.7"/><text x="487.7" y="420.6" font-size="5.0" fill="#3c4a14" text-anchor="start" font-weight="400">0 %</text><text x="510.5" y="420.6" font-size="5.0" fill="#3c4a14" text-anchor="start" font-weight="400">10</text><text x="533.3" y="420.6" font-size="5.0" fill="#3c4a14" text-anchor="start" font-weight="400">20</text><text x="556.1" y="420.6" font-size="5.0" fill="#3c4a14" text-anchor="start" font-weight="400">30</text><text x="578.9" y="420.6" font-size="5.0" fill="#3c4a14" text-anchor="start" font-weight="400">40</text><text x="601.7" y="420.6" font-size="5.0" fill="#3c4a14" text-anchor="start" font-weight="400">50</text><text x="624.5" y="420.6" font-size="5.0" fill="#3c4a14" text-anchor="start" font-weight="400">60</text><text x="647.3" y="420.6" font-size="5.0" fill="#3c4a14" text-anchor="start" font-weight="400">70</text><text x="670.1" y="420.6" font-size="5.0" fill="#3c4a14" text-anchor="start" font-weight="400">80</text><text x="692.9" y="420.6" font-size="5.0" fill="#3c4a14" text-anchor="start" font-weight="400">90</text><g clip-path="url(#cpB)"><g filter="url(#cm2)"><rect x="0" y="80" width="480" height="111" fill="#000"/><path d="M21.6 148 Q27.6 156 27 166 Q26 175.5 22.2 175.5 Q17.4 175.5 17.4 166 Q17.6 156 21.6 148Z" fill="#3d3d3d"/><ellipse cx="22.3" cy="164" rx="2.5" ry="7.5" fill="#6b6b6b"/><ellipse cx="22.3" cy="164" rx="1.3" ry="4.8" fill="#808080"/><path d="M399.4 98 L400.4 98 L401.2 113 Q408 113.5 409.6 118 L410.4 130 L410 156 Q408 166 403.5 165 Q399 163 396.6 152 L395.6 124 Q396 116 398.8 113.5 Z" fill="#454545"/><path d="M399.2 119.5 Q405 117.5 407.6 121 L408.6 132 L408.4 155 Q407 162 403.6 161.4 Q400 160 398 150 L397.4 126 Z" fill="#808080"/><path d="M400.6 127 Q404.6 125 406.6 128.6 L407.4 140 L407.2 153.5 Q406 158.6 403.6 158 Q401 156.6 399.6 148 L399.4 134 Z" fill="#b2b2b2"/><path d="M401.6 137 Q404 135 405.8 138 L406.4 146 L406.2 152.5 Q405.4 156 403.8 155.4 Q402 154 401.2 148 Z" fill="#ffffff"/><path d="M402.6 160 L407.4 160 L409 172 L404.6 172Z" fill="#383838"/><path d="M413.2 98 L414.2 98 L414.6 110 Q417.6 113 417.8 119 L417.6 134 Q416.6 140 414 141.6 L411.2 139 L411.2 113 Z" fill="#454545"/><path d="M412.2 115 Q415.6 115 416.2 120 L416 131 Q415 136 413.4 137 L412.2 134 Z" fill="#808080"/><path d="M412.8 118 Q414.8 118 415.2 122 L415 129 Q414.4 132 413.4 132.6 L412.8 130Z" fill="#b8b8b8"/></g><g filter="url(#cm1)"><rect x="-20" y="180" width="520" height="100" fill="#000"/><path fill="#050505" d="M69.5 218.8h1.6V227.7h-1.6zM71.0 219.1h1.6V227.9h-1.6zM72.5 219.1h1.6V227.9h-1.6zM74.0 219.1h1.6V227.7h-1.6zM75.5 219.1h1.6V228.8h-1.6zM77.0 218.6h1.6V228.5h-1.6z"/><path fill="#0a0a0a" d="M17.0 218.7h1.6V229.2h-1.6zM18.5 218.5h1.6V229.3h-1.6zM198.5 218.5h1.6V230.6h-1.6zM200.0 218.3h1.6V229.7h-1.6zM201.5 218.0h1.6V230.5h-1.6zM203.0 217.8h1.6V229.5h-1.6z"/><path fill="#0d0d0d" d="M54.5 219.1h1.6V229.3h-1.6zM56.0 218.7h1.6V229.2h-1.6zM57.5 219.0h1.6V227.9h-1.6zM59.0 218.9h1.6V227.7h-1.6zM60.5 218.8h1.6V227.7h-1.6zM368.0 218.0h1.6V228.6h-1.6zM369.5 217.7h1.6V228.6h-1.6zM371.0 218.1h1.6V228.0h-1.6zM372.5 218.4h1.6V227.7h-1.6zM374.0 218.4h1.6V229.1h-1.6zM375.5 218.3h1.6V228.2h-1.6zM377.0 217.9h1.6V229.6h-1.6zM378.5 218.4h1.6V228.7h-1.6z"/><path fill="#0f0f0f" d="M135.5 217.7h1.6V228.3h-1.6zM137.0 217.3h1.6V228.1h-1.6zM138.5 217.3h1.6V227.7h-1.6zM140.0 217.3h1.6V228.9h-1.6z"/><path fill="#141414" d="M396.5 217.6h1.6V228.2h-1.6zM398.0 217.5h1.6V227.7h-1.6zM399.5 217.3h1.6V228.5h-1.6zM401.0 217.8h1.6V227.7h-1.6z"/><path fill="#1a1a1a" d="M23.0 228.8h1.6V250.0h-1.6zM24.5 229.2h1.6V250.0h-1.6zM35.0 217.5h1.6V227.7h-1.6zM36.5 217.3h1.6V227.7h-1.6zM38.0 217.3h1.6V228.3h-1.6zM39.5 217.8h1.6V228.4h-1.6zM41.0 218.3h1.6V227.7h-1.6zM42.5 218.6h1.6V227.7h-1.6zM44.0 218.1h1.6V227.7h-1.6zM137.0 227.9h1.6V250.0h-1.6zM138.5 227.5h1.6V250.0h-1.6zM140.0 228.7h1.6V250.0h-1.6zM156.5 217.4h1.6V228.9h-1.6zM158.0 217.6h1.6V230.3h-1.6zM159.5 217.3h1.6V231.6h-1.6zM161.0 217.7h1.6V232.9h-1.6zM240.5 218.1h1.6V227.7h-1.6zM242.0 218.3h1.6V228.1h-1.6zM243.5 218.4h1.6V227.7h-1.6zM245.0 218.7h1.6V228.7h-1.6zM246.5 219.1h1.6V229.0h-1.6zM248.0 218.8h1.6V229.5h-1.6z"/><path fill="#1f1f1f" d="M71.0 205.8h1.6V219.2h-1.6zM72.5 206.2h1.6V219.2h-1.6zM74.0 206.5h1.6V219.2h-1.6zM75.5 207.1h1.6V219.2h-1.6zM77.0 206.9h1.6V218.7h-1.6z"/><path fill="#242424" d="M20.0 218.0h1.6V229.3h-1.6zM21.5 217.5h1.6V228.0h-1.6zM23.0 217.3h1.6V229.0h-1.6zM24.5 217.8h1.6V229.4h-1.6zM26.0 218.4h1.6V229.0h-1.6z"/><path fill="#292929" d="M78.5 218.1h1.6V227.7h-1.6zM80.0 217.9h1.6V227.7h-1.6zM81.5 217.5h1.6V227.7h-1.6zM83.0 217.3h1.6V227.7h-1.6zM123.5 217.3h1.6V232.4h-1.6zM125.0 217.8h1.6V231.4h-1.6zM126.5 218.2h1.6V230.3h-1.6zM128.0 218.0h1.6V230.8h-1.6zM363.5 218.1h1.6V228.7h-1.6zM365.0 217.8h1.6V230.0h-1.6zM366.5 217.7h1.6V229.5h-1.6z"/><path fill="#2e2e2e" d="M410.0 218.3h1.6V227.7h-1.6zM411.5 218.9h1.6V229.1h-1.6zM413.0 218.8h1.6V228.3h-1.6zM414.5 218.4h1.6V229.6h-1.6zM416.0 218.8h1.6V230.3h-1.6z"/><path fill="#333333" d="M62.0 219.1h1.6V228.9h-1.6zM63.5 219.0h1.6V228.2h-1.6zM65.0 219.1h1.6V229.3h-1.6zM66.5 218.8h1.6V228.4h-1.6zM68.0 218.9h1.6V228.3h-1.6zM105.5 217.5h1.6V229.0h-1.6zM107.0 217.3h1.6V228.4h-1.6zM108.5 217.3h1.6V229.8h-1.6zM110.0 217.8h1.6V231.2h-1.6zM111.5 217.5h1.6V230.4h-1.6zM113.0 217.7h1.6V229.5h-1.6zM114.5 217.6h1.6V230.5h-1.6zM116.0 217.3h1.6V231.4h-1.6zM231.5 217.3h1.6V227.7h-1.6zM233.0 217.3h1.6V227.7h-1.6zM234.5 217.3h1.6V228.0h-1.6zM236.0 217.6h1.6V228.4h-1.6zM237.5 217.4h1.6V228.1h-1.6zM239.0 217.7h1.6V227.7h-1.6zM255.5 219.1h1.6V228.3h-1.6zM257.0 219.1h1.6V227.7h-1.6zM258.5 218.8h1.6V227.7h-1.6zM260.0 219.1h1.6V227.7h-1.6zM402.5 218.3h1.6V228.4h-1.6zM404.0 218.8h1.6V227.8h-1.6zM459.5 217.4h1.6V229.8h-1.6z"/><path fill="#383838" d="M84.5 217.3h1.6V228.0h-1.6zM86.0 217.3h1.6V227.7h-1.6zM87.5 217.9h1.6V228.7h-1.6zM89.0 217.4h1.6V228.7h-1.6zM90.5 217.3h1.6V228.2h-1.6zM92.0 217.3h1.6V227.7h-1.6zM93.5 217.3h1.6V227.8h-1.6zM95.0 217.3h1.6V227.7h-1.6zM96.5 217.6h1.6V228.8h-1.6zM98.0 217.3h1.6V228.4h-1.6zM141.5 217.3h1.6V228.9h-1.6zM143.0 217.3h1.6V227.7h-1.6zM144.5 217.7h1.6V227.7h-1.6zM146.0 217.9h1.6V227.7h-1.6zM147.5 218.0h1.6V227.7h-1.6zM149.0 217.5h1.6V228.6h-1.6zM216.5 217.6h1.6V230.0h-1.6zM218.0 217.3h1.6V229.0h-1.6zM219.5 217.5h1.6V230.1h-1.6zM221.0 217.3h1.6V229.3h-1.6zM318.5 217.3h1.6V230.6h-1.6zM320.0 217.3h1.6V232.1h-1.6zM321.5 217.3h1.6V231.2h-1.6zM323.0 217.3h1.6V230.0h-1.6zM410.0 208.3h1.6V218.4h-1.6zM411.5 208.2h1.6V219.0h-1.6zM413.0 208.0h1.6V218.9h-1.6zM414.5 208.0h1.6V218.5h-1.6zM416.0 208.6h1.6V218.9h-1.6zM426.5 207.4h1.6V218.9h-1.6zM428.0 207.9h1.6V218.6h-1.6zM429.5 207.7h1.6V218.8h-1.6z"/><path fill="#3d3d3d" d="M27.5 218.2h1.6V230.1h-1.6zM29.0 217.9h1.6V229.0h-1.6zM30.5 218.0h1.6V228.0h-1.6zM32.0 218.1h1.6V227.7h-1.6zM33.5 217.7h1.6V227.7h-1.6zM45.5 218.2h1.6V228.5h-1.6zM47.0 218.4h1.6V227.9h-1.6zM48.5 218.4h1.6V228.2h-1.6zM50.0 218.3h1.6V229.5h-1.6zM51.5 218.6h1.6V228.2h-1.6zM53.0 218.9h1.6V229.7h-1.6zM159.5 231.4h1.6V250.0h-1.6zM161.0 232.7h1.6V250.0h-1.6zM162.5 231.6h1.6V250.0h-1.6zM164.0 230.8h1.6V250.0h-1.6zM170.0 218.4h1.6V234.7h-1.6zM171.5 218.8h1.6V234.7h-1.6zM173.0 218.8h1.6V234.5h-1.6zM174.5 218.6h1.6V233.6h-1.6zM204.5 217.3h1.6V228.8h-1.6zM206.0 217.3h1.6V228.9h-1.6zM207.5 217.3h1.6V230.2h-1.6zM209.0 217.3h1.6V230.0h-1.6zM249.5 218.6h1.6V228.4h-1.6zM251.0 218.7h1.6V229.4h-1.6zM252.5 218.9h1.6V229.8h-1.6zM254.0 219.1h1.6V228.3h-1.6zM333.5 217.8h1.6V227.7h-1.6zM335.0 218.3h1.6V228.8h-1.6zM336.5 218.5h1.6V227.7h-1.6zM338.0 218.6h1.6V227.7h-1.6zM354.5 218.5h1.6V227.7h-1.6zM356.0 218.3h1.6V227.7h-1.6zM357.5 218.5h1.6V229.1h-1.6zM359.0 218.2h1.6V229.0h-1.6zM360.5 218.4h1.6V230.4h-1.6zM362.0 218.4h1.6V228.9h-1.6zM380.0 217.9h1.6V227.7h-1.6zM381.5 218.4h1.6V228.9h-1.6zM383.0 218.9h1.6V230.4h-1.6zM384.5 219.1h1.6V229.4h-1.6zM392.0 218.0h1.6V228.2h-1.6zM393.5 217.9h1.6V229.2h-1.6zM395.0 217.8h1.6V229.1h-1.6zM426.5 218.8h1.6V228.0h-1.6zM428.0 218.5h1.6V227.8h-1.6zM429.5 218.7h1.6V228.2h-1.6zM431.0 218.9h1.6V229.2h-1.6z"/><path fill="#4a4a4a" d="M426.5 227.8h1.6V250.0h-1.6zM428.0 227.6h1.6V250.0h-1.6z"/><path fill="#525252" d="M162.5 217.6h1.6V231.8h-1.6zM164.0 217.3h1.6V231.0h-1.6zM165.5 217.8h1.6V231.9h-1.6zM167.0 218.0h1.6V232.5h-1.6zM168.5 218.5h1.6V233.6h-1.6z"/><path fill="#5c5c5c" d="M99.5 217.6h1.6V228.5h-1.6zM101.0 218.0h1.6V227.7h-1.6zM102.5 218.4h1.6V228.8h-1.6zM104.0 218.0h1.6V229.5h-1.6zM150.5 217.3h1.6V227.8h-1.6zM152.0 217.4h1.6V227.8h-1.6zM153.5 217.3h1.6V229.1h-1.6zM155.0 217.3h1.6V229.1h-1.6zM290.0 217.3h1.6V231.5h-1.6zM291.5 217.3h1.6V232.5h-1.6zM293.0 217.8h1.6V233.2h-1.6zM294.5 217.7h1.6V232.8h-1.6zM312.5 217.7h1.6V232.2h-1.6zM314.0 217.9h1.6V231.5h-1.6zM315.5 217.7h1.6V231.6h-1.6zM317.0 217.4h1.6V230.6h-1.6zM386.0 219.1h1.6V228.0h-1.6zM387.5 218.9h1.6V227.7h-1.6zM389.0 218.6h1.6V227.7h-1.6zM390.5 218.2h1.6V229.1h-1.6z"/><path fill="#616161" d="M417.5 230.4h1.6V250.0h-1.6z"/><path fill="#666666" d="M117.5 217.6h1.6V232.6h-1.6zM119.0 217.3h1.6V232.6h-1.6zM120.5 217.7h1.6V232.1h-1.6zM122.0 217.5h1.6V231.8h-1.6zM129.5 217.4h1.6V229.7h-1.6zM131.0 217.4h1.6V230.1h-1.6zM132.5 217.9h1.6V229.9h-1.6zM134.0 217.6h1.6V229.1h-1.6zM195.5 218.9h1.6V232.9h-1.6zM197.0 218.9h1.6V231.8h-1.6zM210.5 217.3h1.6V229.7h-1.6zM212.0 217.3h1.6V231.1h-1.6zM213.5 217.5h1.6V231.8h-1.6zM215.0 217.3h1.6V231.3h-1.6zM222.5 217.3h1.6V228.3h-1.6zM224.0 217.9h1.6V229.7h-1.6zM225.5 218.4h1.6V228.9h-1.6zM227.0 217.8h1.6V228.5h-1.6zM228.5 217.8h1.6V228.4h-1.6zM230.0 217.3h1.6V228.4h-1.6zM261.5 219.0h1.6V227.7h-1.6zM263.0 219.1h1.6V228.3h-1.6zM264.5 218.6h1.6V228.7h-1.6zM266.0 218.9h1.6V227.9h-1.6zM324.5 217.8h1.6V230.2h-1.6zM326.0 217.7h1.6V229.9h-1.6zM327.5 217.5h1.6V229.5h-1.6zM329.0 218.0h1.6V228.9h-1.6zM330.5 218.2h1.6V228.9h-1.6zM332.0 217.9h1.6V228.0h-1.6zM348.5 219.1h1.6V228.0h-1.6zM350.0 218.6h1.6V227.7h-1.6zM351.5 218.8h1.6V228.1h-1.6zM353.0 218.9h1.6V227.7h-1.6zM405.5 219.1h1.6V227.7h-1.6zM407.0 218.5h1.6V227.7h-1.6zM408.5 218.7h1.6V228.9h-1.6zM432.5 218.7h1.6V230.2h-1.6zM434.0 218.9h1.6V229.8h-1.6zM435.5 218.6h1.6V229.1h-1.6zM437.0 218.7h1.6V230.2h-1.6zM438.5 219.1h1.6V229.9h-1.6zM440.0 219.1h1.6V229.1h-1.6zM441.5 218.6h1.6V230.6h-1.6zM443.0 219.0h1.6V231.5h-1.6zM452.0 217.8h1.6V232.1h-1.6zM453.5 217.5h1.6V231.0h-1.6zM455.0 217.7h1.6V231.3h-1.6zM456.5 217.5h1.6V229.8h-1.6zM458.0 217.3h1.6V228.9h-1.6z"/><path fill="#6e6e6e" d="M134.0 228.9h1.6V250.0h-1.6zM135.5 228.1h1.6V250.0h-1.6zM395.0 228.9h1.6V250.0h-1.6zM396.5 228.0h1.6V250.0h-1.6zM398.0 227.5h1.6V250.0h-1.6zM399.5 228.3h1.6V250.0h-1.6zM401.0 227.5h1.6V250.0h-1.6z"/><path fill="#737373" d="M134.0 209.4h1.6V217.7h-1.6zM135.5 209.0h1.6V217.8h-1.6zM137.0 208.5h1.6V217.4h-1.6z"/><path fill="#757575" d="M267.5 218.3h1.6V228.1h-1.6zM269.0 218.5h1.6V227.7h-1.6zM270.5 218.3h1.6V228.2h-1.6zM272.0 218.2h1.6V228.1h-1.6zM273.5 217.9h1.6V229.3h-1.6zM275.0 217.3h1.6V230.6h-1.6zM276.5 217.9h1.6V231.6h-1.6zM278.0 217.5h1.6V230.9h-1.6zM279.5 217.6h1.6V230.0h-1.6zM281.0 218.2h1.6V230.1h-1.6zM282.5 218.2h1.6V231.0h-1.6zM284.0 217.8h1.6V231.7h-1.6zM285.5 217.3h1.6V231.6h-1.6zM287.0 217.3h1.6V231.6h-1.6zM288.5 217.3h1.6V230.5h-1.6z"/><path fill="#7a7a7a" d="M21.5 227.8h1.6V250.0h-1.6zM99.5 228.3h1.6V250.0h-1.6zM101.0 227.5h1.6V250.0h-1.6zM102.5 228.6h1.6V250.0h-1.6zM141.5 228.7h1.6V250.0h-1.6zM158.0 230.1h1.6V250.0h-1.6zM176.0 218.7h1.6V232.1h-1.6z"/><path fill="#808080" d="M171.5 206.2h1.6V218.9h-1.6zM173.0 205.8h1.6V218.9h-1.6zM174.5 205.8h1.6V218.7h-1.6zM177.5 218.5h1.6V230.7h-1.6zM179.0 217.9h1.6V230.7h-1.6zM180.5 218.5h1.6V231.6h-1.6zM182.0 218.0h1.6V230.9h-1.6zM183.5 217.5h1.6V230.2h-1.6zM185.0 217.9h1.6V231.4h-1.6zM186.5 218.4h1.6V230.4h-1.6zM188.0 217.9h1.6V231.0h-1.6zM189.5 217.8h1.6V231.6h-1.6zM191.0 218.0h1.6V232.9h-1.6zM192.5 218.4h1.6V231.6h-1.6zM194.0 218.4h1.6V232.7h-1.6zM203.0 205.8h1.6V217.9h-1.6zM204.5 205.8h1.6V217.4h-1.6zM206.0 206.3h1.6V217.4h-1.6zM207.5 206.2h1.6V217.4h-1.6zM222.5 207.3h1.6V217.4h-1.6zM224.0 206.8h1.6V218.0h-1.6zM225.5 206.9h1.6V218.5h-1.6zM227.0 206.5h1.6V217.9h-1.6zM228.5 206.3h1.6V217.9h-1.6zM296.0 217.5h1.6V233.1h-1.6zM297.5 217.3h1.6V232.4h-1.6zM299.0 217.3h1.6V233.4h-1.6zM300.5 217.3h1.6V232.6h-1.6zM302.0 217.3h1.6V231.7h-1.6zM303.5 217.7h1.6V232.9h-1.6zM305.0 218.2h1.6V234.1h-1.6zM306.5 217.7h1.6V234.7h-1.6zM308.0 218.0h1.6V234.6h-1.6zM309.5 217.4h1.6V233.9h-1.6zM311.0 217.4h1.6V232.8h-1.6zM339.5 219.1h1.6V227.7h-1.6zM341.0 219.1h1.6V228.8h-1.6zM342.5 218.7h1.6V227.7h-1.6zM344.0 219.1h1.6V228.2h-1.6zM345.5 219.1h1.6V228.7h-1.6zM347.0 218.5h1.6V228.8h-1.6zM405.5 207.2h1.6V219.2h-1.6zM407.0 206.9h1.6V218.6h-1.6zM408.5 207.4h1.6V218.8h-1.6zM444.5 218.8h1.6V230.2h-1.6zM446.0 219.1h1.6V229.2h-1.6zM447.5 218.9h1.6V230.5h-1.6zM449.0 218.7h1.6V230.4h-1.6zM450.5 218.2h1.6V231.7h-1.6z"/><path fill="#878787" d="M26.0 228.8h1.6V250.0h-1.6zM165.5 231.7h1.6V250.0h-1.6zM167.0 232.3h1.6V250.0h-1.6zM168.5 233.4h1.6V250.0h-1.6zM170.0 234.5h1.6V250.0h-1.6zM441.5 230.4h1.6V250.0h-1.6zM443.0 231.3h1.6V250.0h-1.6zM444.5 230.0h1.6V250.0h-1.6zM446.0 229.0h1.6V250.0h-1.6z"/><path fill="#8c8c8c" d="M69.5 205.8h1.6V218.9h-1.6zM78.5 207.1h1.6V218.2h-1.6zM431.0 208.2h1.6V219.0h-1.6z"/><path fill="#949494" d="M386.0 227.8h1.6V250.0h-1.6zM387.5 227.5h1.6V250.0h-1.6zM389.0 227.5h1.6V250.0h-1.6zM390.5 228.9h1.6V250.0h-1.6zM392.0 228.0h1.6V250.0h-1.6zM393.5 229.0h1.6V250.0h-1.6zM456.5 229.6h1.6V250.0h-1.6zM458.0 228.7h1.6V250.0h-1.6zM459.5 229.6h1.6V250.0h-1.6z"/><path fill="#999999" d="M132.5 209.4h1.6V218.0h-1.6zM138.5 209.3h1.6V217.4h-1.6zM144.5 208.8h1.6V217.8h-1.6zM146.0 208.1h1.6V218.0h-1.6zM158.0 209.4h1.6V217.7h-1.6zM170.0 206.2h1.6V218.5h-1.6zM366.5 229.3h1.6V250.0h-1.6zM368.0 228.4h1.6V250.0h-1.6zM369.5 228.4h1.6V250.0h-1.6zM371.0 227.8h1.6V250.0h-1.6zM459.5 206.3h1.6V217.5h-1.6z"/><path fill="#9e9e9e" d="M221.0 207.4h1.6V217.4h-1.6zM327.5 208.4h1.6V217.6h-1.6zM444.5 207.0h1.6V218.9h-1.6zM446.0 206.3h1.6V219.2h-1.6zM447.5 206.4h1.6V219.0h-1.6zM449.0 207.2h1.6V218.8h-1.6zM450.5 207.7h1.6V218.3h-1.6z"/><path fill="#a1a1a1" d="M75.5 228.6h1.6V250.0h-1.6zM77.0 228.3h1.6V250.0h-1.6zM78.5 227.5h1.6V250.0h-1.6zM128.0 230.6h1.6V250.0h-1.6zM129.5 229.5h1.6V250.0h-1.6zM131.0 229.9h1.6V250.0h-1.6zM132.5 229.7h1.6V250.0h-1.6zM354.5 227.5h1.6V250.0h-1.6zM356.0 227.5h1.6V250.0h-1.6zM357.5 228.9h1.6V250.0h-1.6zM359.0 228.8h1.6V250.0h-1.6zM372.5 227.5h1.6V250.0h-1.6zM374.0 228.9h1.6V250.0h-1.6zM375.5 228.0h1.6V250.0h-1.6zM377.0 229.4h1.6V250.0h-1.6zM378.5 228.5h1.6V250.0h-1.6zM402.5 228.2h1.6V250.0h-1.6z"/><path fill="#a6a6a6" d="M38.0 228.1h1.6V250.0h-1.6zM39.5 228.2h1.6V250.0h-1.6zM41.0 227.5h1.6V250.0h-1.6z"/><path fill="#a8a8a8" d="M101.0 208.1h1.6V218.1h-1.6zM102.5 209.1h1.6V218.5h-1.6zM104.0 209.4h1.6V218.1h-1.6zM105.5 209.4h1.6V217.6h-1.6zM176.0 206.2h1.6V218.8h-1.6zM195.5 205.8h1.6V219.0h-1.6zM197.0 205.8h1.6V219.0h-1.6zM198.5 205.8h1.6V218.6h-1.6zM200.0 205.8h1.6V218.4h-1.6zM201.5 205.8h1.6V218.1h-1.6zM209.0 206.9h1.6V217.4h-1.6zM230.0 205.8h1.6V217.4h-1.6zM318.5 209.1h1.6V217.4h-1.6zM333.5 207.0h1.6V217.9h-1.6z"/><path fill="#ababab" d="M54.5 229.1h1.6V250.0h-1.6zM56.0 229.0h1.6V250.0h-1.6zM117.5 232.4h1.6V250.0h-1.6zM119.0 232.4h1.6V250.0h-1.6z"/><path fill="#adadad" d="M90.5 205.8h1.6V217.4h-1.6zM92.0 206.5h1.6V217.4h-1.6zM300.5 209.0h1.6V217.4h-1.6zM302.0 209.0h1.6V217.4h-1.6zM312.5 209.1h1.6V217.8h-1.6zM372.5 208.1h1.6V218.5h-1.6zM374.0 207.7h1.6V218.5h-1.6zM375.5 207.0h1.6V218.4h-1.6zM377.0 207.4h1.6V218.0h-1.6z"/><path fill="#b2b2b2" d="M57.5 206.5h1.6V219.1h-1.6zM59.0 205.8h1.6V219.0h-1.6zM84.5 206.5h1.6V217.4h-1.6zM237.5 207.1h1.6V217.5h-1.6zM239.0 208.0h1.6V217.8h-1.6zM255.5 208.4h1.6V219.2h-1.6zM257.0 208.7h1.6V219.2h-1.6zM290.0 207.1h1.6V217.4h-1.6z"/><path fill="#c4c4c4" d="M171.5 234.5h1.6V250.0h-1.6zM173.0 234.3h1.6V250.0h-1.6zM174.5 233.4h1.6V250.0h-1.6zM176.0 231.9h1.6V250.0h-1.6zM177.5 230.5h1.6V250.0h-1.6zM179.0 230.5h1.6V250.0h-1.6zM180.5 231.4h1.6V250.0h-1.6zM182.0 230.7h1.6V250.0h-1.6zM183.5 230.0h1.6V250.0h-1.6zM185.0 231.2h1.6V250.0h-1.6zM186.5 230.2h1.6V250.0h-1.6zM188.0 230.8h1.6V250.0h-1.6zM189.5 231.4h1.6V250.0h-1.6zM191.0 232.7h1.6V250.0h-1.6zM192.5 231.4h1.6V250.0h-1.6zM194.0 232.5h1.6V250.0h-1.6zM195.5 232.7h1.6V250.0h-1.6zM197.0 231.6h1.6V250.0h-1.6zM198.5 230.4h1.6V250.0h-1.6zM200.0 229.5h1.6V250.0h-1.6zM201.5 230.3h1.6V250.0h-1.6zM203.0 229.3h1.6V250.0h-1.6zM204.5 228.6h1.6V250.0h-1.6zM206.0 228.7h1.6V250.0h-1.6zM207.5 230.0h1.6V250.0h-1.6zM209.0 229.8h1.6V250.0h-1.6zM210.5 229.5h1.6V250.0h-1.6zM212.0 230.9h1.6V250.0h-1.6zM213.5 231.6h1.6V250.0h-1.6zM215.0 231.1h1.6V250.0h-1.6zM216.5 229.8h1.6V250.0h-1.6zM218.0 228.8h1.6V250.0h-1.6zM219.5 229.9h1.6V250.0h-1.6zM221.0 229.1h1.6V250.0h-1.6zM222.5 228.1h1.6V250.0h-1.6zM224.0 229.5h1.6V250.0h-1.6zM225.5 228.7h1.6V250.0h-1.6zM227.0 228.3h1.6V250.0h-1.6zM228.5 228.2h1.6V250.0h-1.6zM230.0 228.2h1.6V250.0h-1.6zM231.5 227.5h1.6V250.0h-1.6zM233.0 227.5h1.6V250.0h-1.6zM234.5 227.8h1.6V250.0h-1.6zM236.0 228.2h1.6V250.0h-1.6zM237.5 227.9h1.6V250.0h-1.6zM239.0 227.5h1.6V250.0h-1.6zM240.5 227.5h1.6V250.0h-1.6zM242.0 227.9h1.6V250.0h-1.6zM243.5 227.5h1.6V250.0h-1.6zM245.0 228.5h1.6V250.0h-1.6zM246.5 228.8h1.6V250.0h-1.6zM248.0 229.3h1.6V250.0h-1.6zM249.5 228.2h1.6V250.0h-1.6zM251.0 229.2h1.6V250.0h-1.6zM252.5 229.6h1.6V250.0h-1.6zM254.0 228.1h1.6V250.0h-1.6zM255.5 228.1h1.6V250.0h-1.6zM257.0 227.5h1.6V250.0h-1.6zM258.5 227.5h1.6V250.0h-1.6zM260.0 227.5h1.6V250.0h-1.6zM261.5 227.5h1.6V250.0h-1.6zM263.0 228.1h1.6V250.0h-1.6zM264.5 228.5h1.6V250.0h-1.6zM266.0 227.7h1.6V250.0h-1.6zM267.5 227.9h1.6V250.0h-1.6zM269.0 227.5h1.6V250.0h-1.6zM270.5 228.0h1.6V250.0h-1.6zM272.0 227.9h1.6V250.0h-1.6zM273.5 229.1h1.6V250.0h-1.6zM275.0 230.4h1.6V250.0h-1.6zM276.5 231.4h1.6V250.0h-1.6zM278.0 230.7h1.6V250.0h-1.6zM279.5 229.8h1.6V250.0h-1.6zM281.0 229.9h1.6V250.0h-1.6zM282.5 230.8h1.6V250.0h-1.6zM284.0 231.5h1.6V250.0h-1.6zM285.5 231.4h1.6V250.0h-1.6zM287.0 231.4h1.6V250.0h-1.6zM288.5 230.3h1.6V250.0h-1.6zM290.0 231.3h1.6V250.0h-1.6zM291.5 232.3h1.6V250.0h-1.6zM293.0 233.0h1.6V250.0h-1.6zM294.5 232.6h1.6V250.0h-1.6zM296.0 232.9h1.6V250.0h-1.6zM297.5 232.2h1.6V250.0h-1.6zM299.0 233.2h1.6V250.0h-1.6zM300.5 232.4h1.6V250.0h-1.6zM302.0 231.5h1.6V250.0h-1.6zM303.5 232.7h1.6V250.0h-1.6zM305.0 233.9h1.6V250.0h-1.6zM306.5 234.5h1.6V250.0h-1.6zM308.0 234.4h1.6V250.0h-1.6zM309.5 233.7h1.6V250.0h-1.6zM311.0 232.6h1.6V250.0h-1.6zM312.5 232.0h1.6V250.0h-1.6zM314.0 231.3h1.6V250.0h-1.6zM315.5 231.4h1.6V250.0h-1.6zM317.0 230.4h1.6V250.0h-1.6zM318.5 230.4h1.6V250.0h-1.6zM320.0 231.9h1.6V250.0h-1.6zM321.5 231.0h1.6V250.0h-1.6zM323.0 229.8h1.6V250.0h-1.6zM324.5 230.0h1.6V250.0h-1.6zM326.0 229.7h1.6V250.0h-1.6zM327.5 229.3h1.6V250.0h-1.6zM329.0 228.7h1.6V250.0h-1.6zM330.5 228.7h1.6V250.0h-1.6zM332.0 227.8h1.6V250.0h-1.6zM333.5 227.5h1.6V250.0h-1.6zM335.0 228.6h1.6V250.0h-1.6zM336.5 227.5h1.6V250.0h-1.6zM338.0 227.5h1.6V250.0h-1.6zM339.5 227.5h1.6V250.0h-1.6zM341.0 228.6h1.6V250.0h-1.6zM342.5 227.5h1.6V250.0h-1.6zM344.0 228.0h1.6V250.0h-1.6zM345.5 228.5h1.6V250.0h-1.6zM347.0 228.6h1.6V250.0h-1.6zM348.5 227.8h1.6V250.0h-1.6zM350.0 227.5h1.6V250.0h-1.6zM351.5 227.9h1.6V250.0h-1.6zM353.0 227.5h1.6V250.0h-1.6z"/><path fill="#dbdbdb" d="M80.0 227.5h1.6V250.0h-1.6zM81.5 227.5h1.6V250.0h-1.6zM83.0 227.5h1.6V250.0h-1.6zM84.5 227.8h1.6V250.0h-1.6zM86.0 227.5h1.6V250.0h-1.6zM87.5 228.5h1.6V250.0h-1.6zM89.0 228.5h1.6V250.0h-1.6zM90.5 228.0h1.6V250.0h-1.6zM92.0 227.5h1.6V250.0h-1.6zM93.5 227.6h1.6V250.0h-1.6zM95.0 227.5h1.6V250.0h-1.6zM96.5 228.6h1.6V250.0h-1.6zM98.0 228.2h1.6V250.0h-1.6zM147.5 206.8h1.6V218.1h-1.6zM149.0 206.9h1.6V217.6h-1.6zM150.5 207.1h1.6V217.4h-1.6zM152.0 207.6h1.6V217.5h-1.6zM153.5 208.0h1.6V217.4h-1.6zM155.0 208.0h1.6V217.4h-1.6zM156.5 208.0h1.6V217.5h-1.6zM360.5 230.2h1.6V250.0h-1.6zM362.0 228.7h1.6V250.0h-1.6zM363.5 228.5h1.6V250.0h-1.6zM365.0 229.8h1.6V250.0h-1.6zM380.0 227.5h1.6V250.0h-1.6zM381.5 228.7h1.6V250.0h-1.6zM383.0 230.2h1.6V250.0h-1.6zM384.5 229.2h1.6V250.0h-1.6z"/><path fill="#f5f5f5" d="M17.0 229.0h1.6V250.0h-1.6zM18.5 229.1h1.6V250.0h-1.6zM20.0 229.1h1.6V250.0h-1.6zM27.5 229.9h1.6V250.0h-1.6zM29.0 228.8h1.6V250.0h-1.6zM30.5 227.8h1.6V250.0h-1.6zM32.0 227.5h1.6V250.0h-1.6zM33.5 227.5h1.6V250.0h-1.6zM35.0 227.5h1.6V250.0h-1.6zM36.5 227.5h1.6V250.0h-1.6zM42.5 227.5h1.6V250.0h-1.6zM44.0 227.5h1.6V250.0h-1.6zM45.5 228.3h1.6V250.0h-1.6zM47.0 227.7h1.6V250.0h-1.6zM48.5 228.0h1.6V250.0h-1.6zM50.0 229.3h1.6V250.0h-1.6zM51.5 228.0h1.6V250.0h-1.6zM53.0 229.5h1.6V250.0h-1.6zM57.5 227.7h1.6V250.0h-1.6zM59.0 227.5h1.6V250.0h-1.6zM60.5 227.5h1.6V250.0h-1.6zM62.0 228.7h1.6V250.0h-1.6zM63.5 228.0h1.6V250.0h-1.6zM65.0 229.1h1.6V250.0h-1.6zM66.5 228.2h1.6V250.0h-1.6zM68.0 228.1h1.6V250.0h-1.6zM69.5 227.5h1.6V250.0h-1.6zM71.0 227.7h1.6V250.0h-1.6zM72.5 227.7h1.6V250.0h-1.6zM74.0 227.5h1.6V250.0h-1.6zM104.0 229.3h1.6V250.0h-1.6zM105.5 228.8h1.6V250.0h-1.6zM107.0 228.2h1.6V250.0h-1.6zM108.5 229.6h1.6V250.0h-1.6zM110.0 231.0h1.6V250.0h-1.6zM111.5 230.2h1.6V250.0h-1.6zM113.0 229.3h1.6V250.0h-1.6zM114.5 230.3h1.6V250.0h-1.6zM116.0 231.2h1.6V250.0h-1.6zM120.5 231.9h1.6V250.0h-1.6zM122.0 231.6h1.6V250.0h-1.6zM123.5 232.2h1.6V250.0h-1.6zM125.0 231.2h1.6V250.0h-1.6zM126.5 230.1h1.6V250.0h-1.6zM143.0 227.5h1.6V250.0h-1.6zM144.5 227.5h1.6V250.0h-1.6zM146.0 227.5h1.6V250.0h-1.6zM147.5 227.5h1.6V250.0h-1.6zM149.0 228.4h1.6V250.0h-1.6zM150.5 227.6h1.6V250.0h-1.6zM152.0 227.6h1.6V250.0h-1.6zM153.5 228.9h1.6V250.0h-1.6zM155.0 228.9h1.6V250.0h-1.6zM156.5 228.7h1.6V250.0h-1.6zM404.0 227.6h1.6V250.0h-1.6zM405.5 227.5h1.6V250.0h-1.6zM407.0 227.5h1.6V250.0h-1.6zM408.5 228.7h1.6V250.0h-1.6zM410.0 227.5h1.6V250.0h-1.6zM411.5 228.9h1.6V250.0h-1.6zM413.0 228.1h1.6V250.0h-1.6zM414.5 229.4h1.6V250.0h-1.6zM416.0 230.1h1.6V250.0h-1.6zM429.5 228.0h1.6V250.0h-1.6zM431.0 229.0h1.6V250.0h-1.6zM432.5 230.0h1.6V250.0h-1.6zM434.0 229.6h1.6V250.0h-1.6zM435.5 228.9h1.6V250.0h-1.6zM437.0 230.0h1.6V250.0h-1.6zM438.5 229.7h1.6V250.0h-1.6zM440.0 228.9h1.6V250.0h-1.6zM447.5 230.3h1.6V250.0h-1.6zM449.0 230.2h1.6V250.0h-1.6zM450.5 231.5h1.6V250.0h-1.6zM452.0 231.9h1.6V250.0h-1.6zM453.5 230.8h1.6V250.0h-1.6zM455.0 231.1h1.6V250.0h-1.6z"/><path fill="#ffffff" d="M17.0 205.6h1.6V218.8h-1.6zM18.5 204.8h1.6V218.6h-1.6zM20.0 204.4h1.6V218.1h-1.6zM21.5 204.4h1.6V217.6h-1.6zM23.0 204.4h1.6V217.4h-1.6zM24.5 204.4h1.6V217.9h-1.6zM26.0 204.6h1.6V218.5h-1.6zM27.5 204.4h1.6V218.3h-1.6zM29.0 204.4h1.6V218.0h-1.6zM30.5 205.0h1.6V218.1h-1.6zM32.0 205.3h1.6V218.2h-1.6zM33.5 204.4h1.6V217.8h-1.6zM35.0 204.8h1.6V217.6h-1.6zM36.5 205.0h1.6V217.4h-1.6zM38.0 205.6h1.6V217.4h-1.6zM39.5 205.7h1.6V217.9h-1.6zM41.0 206.2h1.6V218.4h-1.6zM42.5 205.4h1.6V218.7h-1.6zM44.0 204.7h1.6V218.2h-1.6zM45.5 205.0h1.6V218.3h-1.6zM47.0 205.8h1.6V218.5h-1.6zM48.5 206.0h1.6V218.5h-1.6zM50.0 206.7h1.6V218.4h-1.6zM51.5 207.0h1.6V218.7h-1.6zM53.0 207.3h1.6V219.0h-1.6zM54.5 206.9h1.6V219.2h-1.6zM56.0 205.9h1.6V218.8h-1.6zM60.5 205.1h1.6V218.9h-1.6zM62.0 205.2h1.6V219.2h-1.6zM63.5 206.0h1.6V219.1h-1.6zM65.0 205.7h1.6V219.2h-1.6zM66.5 205.0h1.6V218.9h-1.6zM68.0 204.5h1.6V219.0h-1.6zM80.0 205.2h1.6V218.0h-1.6zM81.5 204.4h1.6V217.6h-1.6zM83.0 204.4h1.6V217.4h-1.6zM86.0 204.7h1.6V217.4h-1.6zM87.5 204.4h1.6V218.0h-1.6zM89.0 204.4h1.6V217.5h-1.6zM93.5 206.0h1.6V217.4h-1.6zM95.0 206.0h1.6V217.4h-1.6zM96.5 207.0h1.6V217.7h-1.6zM98.0 206.5h1.6V217.4h-1.6zM99.5 207.1h1.6V217.7h-1.6zM107.0 207.1h1.6V217.4h-1.6zM108.5 207.4h1.6V217.4h-1.6zM110.0 208.0h1.6V217.9h-1.6zM111.5 207.7h1.6V217.6h-1.6zM113.0 207.1h1.6V217.8h-1.6zM114.5 207.9h1.6V217.7h-1.6zM116.0 208.0h1.6V217.4h-1.6zM117.5 208.0h1.6V217.7h-1.6zM119.0 208.0h1.6V217.4h-1.6zM120.5 208.0h1.6V217.8h-1.6zM122.0 208.0h1.6V217.6h-1.6zM123.5 208.0h1.6V217.4h-1.6zM125.0 207.3h1.6V217.9h-1.6zM126.5 207.9h1.6V218.3h-1.6zM128.0 208.0h1.6V218.1h-1.6zM129.5 208.0h1.6V217.5h-1.6zM131.0 208.0h1.6V217.5h-1.6zM140.0 208.0h1.6V217.4h-1.6zM141.5 208.0h1.6V217.4h-1.6zM143.0 208.0h1.6V217.4h-1.6zM159.5 208.0h1.6V217.4h-1.6zM161.0 208.0h1.6V217.8h-1.6zM162.5 207.3h1.6V217.7h-1.6zM164.0 206.4h1.6V217.4h-1.6zM165.5 206.8h1.6V217.9h-1.6zM167.0 206.1h1.6V218.1h-1.6zM168.5 205.4h1.6V218.6h-1.6zM177.5 204.7h1.6V218.6h-1.6zM179.0 205.0h1.6V218.0h-1.6zM180.5 205.9h1.6V218.6h-1.6zM182.0 205.2h1.6V218.1h-1.6zM183.5 205.7h1.6V217.6h-1.6zM185.0 205.6h1.6V218.0h-1.6zM186.5 205.1h1.6V218.5h-1.6zM188.0 205.2h1.6V218.0h-1.6zM189.5 204.4h1.6V217.9h-1.6zM191.0 204.4h1.6V218.1h-1.6zM192.5 205.0h1.6V218.5h-1.6zM194.0 204.4h1.6V218.5h-1.6zM210.5 206.1h1.6V217.4h-1.6zM212.0 206.5h1.6V217.4h-1.6zM213.5 207.2h1.6V217.6h-1.6zM215.0 207.0h1.6V217.4h-1.6zM216.5 206.2h1.6V217.7h-1.6zM218.0 205.7h1.6V217.4h-1.6zM219.5 206.4h1.6V217.6h-1.6zM231.5 204.4h1.6V217.4h-1.6zM233.0 204.4h1.6V217.4h-1.6zM234.5 204.4h1.6V217.4h-1.6zM236.0 204.9h1.6V217.7h-1.6zM240.5 206.9h1.6V218.2h-1.6zM242.0 207.7h1.6V218.4h-1.6zM243.5 208.0h1.6V218.5h-1.6zM245.0 208.0h1.6V218.8h-1.6zM246.5 208.0h1.6V219.2h-1.6zM248.0 208.0h1.6V218.9h-1.6zM249.5 207.1h1.6V218.7h-1.6zM251.0 206.3h1.6V218.8h-1.6zM252.5 206.5h1.6V219.0h-1.6zM254.0 206.5h1.6V219.2h-1.6zM258.5 206.8h1.6V218.9h-1.6zM260.0 207.3h1.6V219.2h-1.6zM261.5 208.0h1.6V219.1h-1.6zM263.0 208.0h1.6V219.2h-1.6zM264.5 208.0h1.6V218.7h-1.6zM266.0 207.3h1.6V219.0h-1.6zM267.5 206.9h1.6V218.4h-1.6zM269.0 206.0h1.6V218.6h-1.6zM270.5 206.4h1.6V218.4h-1.6zM272.0 206.4h1.6V218.3h-1.6zM273.5 205.7h1.6V218.0h-1.6zM275.0 206.6h1.6V217.4h-1.6zM276.5 206.6h1.6V218.0h-1.6zM278.0 206.5h1.6V217.6h-1.6zM279.5 207.3h1.6V217.7h-1.6zM281.0 206.6h1.6V218.3h-1.6zM282.5 205.9h1.6V218.3h-1.6zM284.0 206.7h1.6V217.9h-1.6zM285.5 207.5h1.6V217.4h-1.6zM287.0 206.5h1.6V217.4h-1.6zM288.5 206.1h1.6V217.4h-1.6zM291.5 206.2h1.6V217.4h-1.6zM293.0 207.1h1.6V217.9h-1.6zM294.5 206.6h1.6V217.8h-1.6zM296.0 207.6h1.6V217.6h-1.6zM297.5 207.5h1.6V217.4h-1.6zM299.0 206.7h1.6V217.4h-1.6zM303.5 208.0h1.6V217.8h-1.6zM305.0 208.0h1.6V218.3h-1.6zM306.5 208.0h1.6V217.8h-1.6zM308.0 208.0h1.6V218.1h-1.6zM309.5 208.0h1.6V217.5h-1.6zM311.0 208.0h1.6V217.5h-1.6zM314.0 208.0h1.6V218.0h-1.6zM315.5 207.6h1.6V217.8h-1.6zM317.0 206.9h1.6V217.5h-1.6zM320.0 208.0h1.6V217.4h-1.6zM321.5 207.3h1.6V217.4h-1.6zM323.0 207.0h1.6V217.4h-1.6zM324.5 206.5h1.6V217.9h-1.6zM326.0 207.0h1.6V217.8h-1.6zM329.0 206.2h1.6V218.1h-1.6zM330.5 205.4h1.6V218.3h-1.6zM332.0 206.1h1.6V218.0h-1.6zM335.0 206.5h1.6V218.4h-1.6zM336.5 205.6h1.6V218.6h-1.6zM338.0 206.4h1.6V218.7h-1.6zM339.5 205.4h1.6V219.2h-1.6zM341.0 206.0h1.6V219.2h-1.6zM342.5 205.5h1.6V218.8h-1.6zM344.0 205.6h1.6V219.2h-1.6zM345.5 206.0h1.6V219.2h-1.6zM347.0 205.9h1.6V218.6h-1.6zM348.5 206.5h1.6V219.2h-1.6zM350.0 206.8h1.6V218.7h-1.6zM351.5 206.3h1.6V218.9h-1.6zM353.0 205.5h1.6V219.0h-1.6zM354.5 205.7h1.6V218.6h-1.6zM356.0 205.9h1.6V218.4h-1.6zM357.5 205.8h1.6V218.6h-1.6zM359.0 206.6h1.6V218.3h-1.6zM360.5 206.1h1.6V218.5h-1.6zM362.0 205.7h1.6V218.5h-1.6zM363.5 206.0h1.6V218.2h-1.6zM365.0 206.4h1.6V217.9h-1.6zM366.5 205.4h1.6V217.8h-1.6zM368.0 205.8h1.6V218.1h-1.6zM369.5 206.3h1.6V217.8h-1.6zM371.0 207.2h1.6V218.2h-1.6zM378.5 205.7h1.6V218.5h-1.6zM380.0 205.0h1.6V218.0h-1.6zM381.5 204.8h1.6V218.5h-1.6zM383.0 205.3h1.6V219.0h-1.6zM384.5 204.9h1.6V219.2h-1.6zM386.0 205.4h1.6V219.2h-1.6zM387.5 205.2h1.6V219.0h-1.6zM389.0 204.5h1.6V218.7h-1.6zM390.5 204.4h1.6V218.3h-1.6zM392.0 205.3h1.6V218.1h-1.6zM393.5 206.0h1.6V218.0h-1.6zM395.0 205.1h1.6V217.9h-1.6zM396.5 205.9h1.6V217.7h-1.6zM398.0 206.7h1.6V217.6h-1.6zM399.5 207.3h1.6V217.4h-1.6zM401.0 206.4h1.6V217.9h-1.6zM402.5 205.9h1.6V218.4h-1.6zM404.0 205.6h1.6V218.9h-1.6zM432.5 206.0h1.6V218.8h-1.6zM434.0 206.2h1.6V219.0h-1.6zM435.5 205.6h1.6V218.7h-1.6zM437.0 204.9h1.6V218.8h-1.6zM438.5 204.5h1.6V219.2h-1.6zM440.0 204.5h1.6V219.2h-1.6zM441.5 204.9h1.6V218.7h-1.6zM443.0 204.8h1.6V219.1h-1.6zM452.0 206.5h1.6V217.9h-1.6zM453.5 206.3h1.6V217.6h-1.6zM455.0 205.8h1.6V217.8h-1.6zM456.5 205.2h1.6V217.6h-1.6zM458.0 205.5h1.6V217.4h-1.6z"/><path d="M410.5 204 L413 200 L416 204 L417 222 L410 222 Z" fill="#424242"/></g><g filter="url(#cm2)"><rect x="397" y="167" width="26" height="32.5" fill="#000"/><ellipse cx="410.2" cy="183" rx="7.6" ry="13.6" fill="#454545"/><ellipse cx="410.4" cy="182.6" rx="6" ry="11.4" fill="#808080"/><ellipse cx="410.8" cy="182.6" rx="4.7" ry="9.6" fill="#b2b2b2"/><ellipse cx="411.2" cy="182.4" rx="3.4" ry="7.4" fill="#ffffff"/></g></g><g clip-path="url(#cpC)"><g filter="url(#cm4)"><rect x="380" y="330" width="60" height="40" fill="#000"/><path d="M400 346.2 Q407 344.4 414 344.8 Q418.2 347.6 414 351 Q407 351 400 346.2Z" fill="#424242"/><path d="M403.4 346.6 Q409 345.4 414 345.8 Q416.8 347.6 414 350 Q409 350 403.4 346.6Z" fill="#808080"/><ellipse cx="412.6" cy="347.8" rx="2.8" ry="2.0" fill="#b2b2b2"/><ellipse cx="413.2" cy="347.8" rx="2.0" ry="1.7" fill="#ffffff"/></g></g><rect x="486" y="89" width="226" height="156" fill="#000"/><g clip-path="url(#cpSv)"><path d="M502.1 91 L567.5 180 Q570 184 567.8 188 L529 244.6" stroke="#e8e8e8" stroke-width="0.8" fill="none" stroke-dasharray="2.2 1.6"/><path d="M532.7 91 L598.4 180 Q600.8 184 599 188 L559.6 244.6" stroke="#e8e8e8" stroke-width="0.8" fill="none" stroke-dasharray="2.2 1.6"/><path d="M676.6 89.5 L610 179.6 Q607 183.6 609.3 188.6 L647.8 244.6" stroke="#e8e8e8" stroke-width="0.8" fill="none" stroke-dasharray="2.2 1.6"/><path d="M707.5 89.5 L639.2 180.6 Q636.4 184.6 638.7 189 L678.4 244.6" stroke="#e8e8e8" stroke-width="0.8" fill="none" stroke-dasharray="2.2 1.6"/></g><g clip-path="url(#cpS)"><g filter="url(#cm3)"><rect x="480" y="80" width="240" height="170" fill="#000"/><ellipse cx="601.0" cy="110.5" rx="2.0" ry="10.0" transform="rotate(-14 601.0 110.5)" fill="#292929"/><ellipse cx="601.0" cy="110.5" rx="1.4" ry="7.0" transform="rotate(-14 601.0 110.5)" fill="#4c4c4c"/><ellipse cx="601.0" cy="110.5" rx="0.7" ry="3.6" transform="rotate(-14 601.0 110.5)" fill="#6b6b6b"/><ellipse cx="645.0" cy="112.5" rx="2.6" ry="9.5" transform="rotate(-16 645.0 112.5)" fill="#292929"/><ellipse cx="645.0" cy="112.5" rx="1.9" ry="6.8" transform="rotate(-16 645.0 112.5)" fill="#4c4c4c"/><ellipse cx="645.0" cy="112.5" rx="1.1" ry="4.0" transform="rotate(-16 645.0 112.5)" fill="#808080"/><ellipse cx="634.0" cy="105.5" rx="0.8" ry="0.8" transform="rotate(0 634.0 105.5)" fill="#404040"/><ellipse cx="602.0" cy="155.8" rx="3.5" ry="13.5" transform="rotate(-47 602.0 155.8)" fill="#292929"/><ellipse cx="602.0" cy="155.8" rx="2.9" ry="11.1" transform="rotate(-47 602.0 155.8)" fill="#4c4c4c"/><ellipse cx="602.0" cy="155.8" rx="2.2" ry="8.4" transform="rotate(-47 602.0 155.8)" fill="#808080"/><ellipse cx="602.0" cy="155.8" rx="1.5" ry="5.9" transform="rotate(-47 602.0 155.8)" fill="#b2b2b2"/><ellipse cx="602.0" cy="155.8" rx="0.9" ry="3.5" transform="rotate(-47 602.0 155.8)" fill="#ffffff"/><ellipse cx="598.0" cy="195.0" rx="3.4" ry="12.0" transform="rotate(-57 598.0 195.0)" fill="#292929"/><ellipse cx="598.0" cy="195.0" rx="2.8" ry="9.8" transform="rotate(-57 598.0 195.0)" fill="#4c4c4c"/><ellipse cx="598.0" cy="195.0" rx="2.1" ry="7.4" transform="rotate(-57 598.0 195.0)" fill="#808080"/><ellipse cx="598.0" cy="195.0" rx="1.5" ry="5.3" transform="rotate(-57 598.0 195.0)" fill="#b2b2b2"/><ellipse cx="598.0" cy="195.0" rx="0.9" ry="3.1" transform="rotate(-57 598.0 195.0)" fill="#ffffff"/><ellipse cx="630.0" cy="188.2" rx="3.6" ry="21.0" transform="rotate(-94 630.0 188.2)" fill="#333333"/><ellipse cx="630.0" cy="188.4" rx="2.2" ry="18.0" transform="rotate(-94 630.0 188.4)" fill="#4c4c4c"/><ellipse cx="613.5" cy="187.5" rx="2.6" ry="4.5" transform="rotate(-60 613.5 187.5)" fill="#292929"/><ellipse cx="613.5" cy="187.5" rx="1.8" ry="3.1" transform="rotate(-60 613.5 187.5)" fill="#4c4c4c"/><ellipse cx="613.5" cy="187.5" rx="0.9" ry="1.6" transform="rotate(-60 613.5 187.5)" fill="#757575"/><ellipse cx="622.0" cy="190.5" rx="2.8" ry="8.5" transform="rotate(-58 622.0 190.5)" fill="#292929"/><ellipse cx="622.0" cy="190.5" rx="2.1" ry="6.3" transform="rotate(-58 622.0 190.5)" fill="#4c4c4c"/><ellipse cx="622.0" cy="190.5" rx="1.3" ry="3.9" transform="rotate(-58 622.0 190.5)" fill="#7a7a7a"/><ellipse cx="622.0" cy="190.5" rx="0.6" ry="1.9" transform="rotate(-58 622.0 190.5)" fill="#8c8c8c"/><ellipse cx="632.5" cy="186.8" rx="3.0" ry="8.5" transform="rotate(-68 632.5 186.8)" fill="#292929"/><ellipse cx="632.5" cy="186.8" rx="2.2" ry="6.3" transform="rotate(-68 632.5 186.8)" fill="#4c4c4c"/><ellipse cx="632.5" cy="186.8" rx="1.4" ry="3.9" transform="rotate(-68 632.5 186.8)" fill="#808080"/><ellipse cx="642.0" cy="188.6" rx="4.8" ry="11.5" transform="rotate(-72 642.0 188.6)" fill="#292929"/><ellipse cx="642.0" cy="188.6" rx="4.0" ry="9.7" transform="rotate(-72 642.0 188.6)" fill="#4c4c4c"/><ellipse cx="642.0" cy="188.6" rx="3.4" ry="8.0" transform="rotate(-72 642.0 188.6)" fill="#808080"/><ellipse cx="642.0" cy="188.6" rx="2.7" ry="6.4" transform="rotate(-72 642.0 188.6)" fill="#b2b2b2"/><ellipse cx="642.0" cy="188.6" rx="2.0" ry="4.8" transform="rotate(-72 642.0 188.6)" fill="#ffffff"/><ellipse cx="650.5" cy="183.0" rx="2.2" ry="5.5" transform="rotate(-72 650.5 183.0)" fill="#292929"/><ellipse cx="650.5" cy="183.0" rx="1.5" ry="3.6" transform="rotate(-72 650.5 183.0)" fill="#4c4c4c"/><ellipse cx="627.0" cy="197.5" rx="1.6" ry="5.0" transform="rotate(-50 627.0 197.5)" fill="#1f1f1f"/><ellipse cx="593.3" cy="207.2" rx="2.0" ry="3.0" transform="rotate(-50 593.3 207.2)" fill="#2e2e2e"/><ellipse cx="593.3" cy="207.2" rx="1.1" ry="1.7" transform="rotate(-50 593.3 207.2)" fill="#4c4c4c"/><ellipse cx="600.5" cy="211.5" rx="1.4" ry="5.0" transform="rotate(-55 600.5 211.5)" fill="#242424"/><ellipse cx="609.5" cy="214.5" rx="2.2" ry="9.5" transform="rotate(-55 609.5 214.5)" fill="#292929"/><ellipse cx="609.5" cy="214.5" rx="1.5" ry="6.5" transform="rotate(-55 609.5 214.5)" fill="#4c4c4c"/><ellipse cx="609.5" cy="214.5" rx="0.7" ry="3.2" transform="rotate(-55 609.5 214.5)" fill="#6b6b6b"/><ellipse cx="617.0" cy="226.0" rx="1.6" ry="7.0" transform="rotate(-70 617.0 226.0)" fill="#1f1f1f"/><ellipse cx="611.0" cy="203.5" rx="1.2" ry="4.0" transform="rotate(-60 611.0 203.5)" fill="#1a1a1a"/><ellipse cx="535.0" cy="197.5" rx="1.6" ry="5.0" transform="rotate(-35 535.0 197.5)" fill="#292929"/></g><ellipse cx="712" cy="88" rx="205.7" ry="159.6" fill="none" stroke="#e0323c" stroke-width="0.9"/><ellipse cx="712" cy="88" rx="22" ry="17" fill="none" stroke="#e0323c" stroke-width="0.8"/><path d="M502.1 91 L567.5 180 Q570 184 567.8 188 L529 244.6" stroke="#222" stroke-width="0.8" fill="none"/><path d="M532.7 91 L598.4 180 Q600.8 184 599 188 L559.6 244.6" stroke="#222" stroke-width="0.8" fill="none"/><path d="M676.6 89.5 L610 179.6 Q607 183.6 609.3 188.6 L647.8 244.6" stroke="#222" stroke-width="0.8" fill="none"/><path d="M707.5 89.5 L639.2 180.6 Q636.4 184.6 638.7 189 L678.4 244.6" stroke="#222" stroke-width="0.8" fill="none"/><path d="M532 194 L703.5 96.8" stroke="#2a2aa8" stroke-width="0.9" fill="none"/></g><g clip-path="url(#cpA)"><path d="M490.5 256.0 L491.9 258.2 L490.6 260.2 L489.7 262.4 L491.0 264.5 L489.4 266.9 L488.2 268.8 L491.2 271.2 L487.4 272.9 L487.7 275.4 L488.2 277.7 L487.8 279.3 L489.7 280.9 L489.2 282.8 L490.4 284.8 L490.7 287.3 L490.6 289.5 L490.5 291.8 L492.1 293.7 L493.8 296.3 L494.2 298.6 L490.1 300.4 L487.6 302.1 L487.6 304.1 L487.5 306.0 L488.3 308.5 L487.5 310.3 L487.4 312.4 L492.7 314.4 L492.7 316.6 L489.4 318.5 L492.0 320.4 L489.5 322.8 L489.4 324.6 L487.6 326.3 L487.8 328.0 L493.5 330.1 L493.5 332.4 L493.5 334.7 L488.1 336.7 L492.0 338.6 L490.0 341.0 L492.0 342.0 L498.0 343.4 L560.0 345.2 L640.0 346.8 L709.0 348.0 L640.0 349.6 L560.0 351.4 L498.0 353.6 L492.0 354.6 L488.2 356.5 L495.2 358.7 L491.1 361.1 L488.2 363.9 L494.7 366.0 L492.1 368.1 L488.3 370.0 L488.2 372.4 L488.1 374.8 L487.8 377.0 L488.0 379.3 L488.2 382.0 L487.8 383.9 L488.2 386.5 L494.6 388.5 L488.2 391.3 L487.8 394.0 L488.1 396.4 L490.7 398.3 L491.8 401.1 L491.9 403.6 L489.5 405.5 L496.0 406.6 L520.0 407.4 L545.0 408.6 L566.0 410.2 L600.0 411.5" stroke="#b4b484" stroke-width="0.65" fill="none" stroke-linejoin="round"/><path d="M502 255.5 L502.7 291.7 L494.7 325.3 L495.7 356 L495.8 410.5" stroke="#c01822" stroke-width="0.7" fill="none"/><circle cx="502.7" cy="291.7" r="1.1" fill="#e8202a"/><circle cx="494.7" cy="325.3" r="1.1" fill="#e8202a"/><circle cx="495.7" cy="356.0" r="1.1" fill="#e8202a"/><path d="M530.9 261 V394.3" stroke="#a41820" stroke-width="1.6" fill="none"/><circle cx="530.9" cy="261.2" r="1.3" fill="#d8202a"/><circle cx="530.9" cy="394.3" r="1.3" fill="#d8202a"/><circle cx="533.2" cy="327.3" r="0.8" fill="#d8202a"/><path d="M666.7 255.5 V355" stroke="#9a2430" stroke-width="0.8" fill="none"/></g><path d="M531 412.2 L532.8 414.2 L531 416.2 L529.2 414.2Z" fill="#d01020"/><path d="M12 180.4H460" stroke="#2a2ab0" stroke-width="0.8"/><path d="M411.2 90V245" stroke="#2a2ab0" stroke-width="0.8"/><path d="M411.1 255.7V410.4" stroke="#c4c4ee" stroke-width="1.9" opacity="0.85"/><path d="M12 259.3H460M12 394.6H460" stroke="#c23434" stroke-width="0.9" stroke-dasharray="1.3 0.6"/><circle cx="7.8" cy="259.4" r="1.75" fill="#e8141e"/><circle cx="7.8" cy="394.4" r="1.75" fill="#e8141e"/><circle cx="482.4" cy="100.3" r="1.75" fill="#e8141e"/><circle cx="482.4" cy="184.5" r="1.75" fill="#e8141e"/><circle cx="482.4" cy="259.5" r="1.75" fill="#e8141e"/><circle cx="482.4" cy="394.8" r="1.75" fill="#e8141e"/><path d="M603.6 92V245" stroke="#30d830" stroke-width="0.8" stroke-dasharray="1.6 1.4"/><path d="M601.6 93.6V91.6H605.6V93.6" stroke="#30d830" stroke-width="0.6" fill="none"/><circle cx="603.6" cy="246.6" r="1.2" fill="#7dff7d"/></svg>
<div style="position:absolute;left:0;top:0;width:750px;height:11.5px;background:#0a5b9d"></div>
<div style="position:absolute;left:2.6px;top:0.8px;width:7.6px;height:9.8px;background:#2b8fe0"></div>
<div style="position:absolute;left:3.9px;top:3.5px;width:2.6px;height:3.4px;border:1.4px solid #fff;border-radius:50%"></div>
<div style="position:absolute;left:8.4px;top:1.2px;width:2px;height:2px;border-radius:50%;background:#e0263a"></div>

<div style="position:absolute;left:703.5px;top:5.3px;width:4.4px;height:0.8px;background:#9fc3e2"></div>
<div style="position:absolute;left:721.6px;top:3.9px;width:3px;height:3px;border:0.7px solid #b7d2ea"></div>
<div style="position:absolute;left:722.8px;top:3px;width:3px;height:3px;border-top:0.7px solid #b7d2ea;border-right:0.7px solid #b7d2ea"></div>
<svg style="position:absolute;left:739.4px;top:3.4px" width="4.6" height="4.6" viewBox="0 0 4.6 4.6"><path d="M0.3 0.3L4.3 4.3M4.3 0.3L0.3 4.3" stroke="#b7d2ea" stroke-width="0.8" fill="none"/></svg>
<div style="position:absolute;left:0;top:11.5px;width:750px;height:17.6px;background:#1d1d1d"></div>
<div style="position:absolute;left:0;top:29px;width:750px;height:2.8px;background:#1a6dba"></div>
<svg style="position:absolute;left:3.6px;top:16.6px" width="9" height="9" viewBox="0 0 9 9"><circle cx="4.3" cy="4.6" r="3.6" fill="#fff"/><path d="M4.3 2.5L6.5 5.9Q4.3 7.1 2.1 5.9Z" fill="#1d1d1d"/></svg>
<div style="position:absolute;left:235.1px;top:13.8px;width:24.6px;height:17.4px;background:#1b8de6;border-radius:1.5px 1.5px 0 0"></div>










<div style="position:absolute;left:654px;top:14.5px;width:0.8px;height:13px;background:#555"></div>
<div style="position:absolute;left:703px;top:14.5px;width:0.8px;height:13px;background:#555"></div>
<div style="position:absolute;left:659.8px;top:17px;width:11.2px;height:8px;background:#1b8de6"></div>




<div style="position:absolute;left:0;top:31.6px;width:750px;height:57.2px;background:#0f1b2e"></div>
<div style="position:absolute;left:0;top:11.5px;width:0.9px;height:77.5px;background:#9fb4cb;opacity:0.75"></div>
<div style="position:absolute;left:1.6px;top:31.6px;width:0.9px;height:57px;background:#1f3654"></div>
<div style="position:absolute;left:166.0px;top:31.6px;width:0.9px;height:57px;background:#1f3654"></div>
<div style="position:absolute;left:252.0px;top:31.6px;width:0.9px;height:57px;background:#1f3654"></div>
<div style="position:absolute;left:337.9px;top:31.6px;width:0.9px;height:57px;background:#1f3654"></div>
<div style="position:absolute;left:423.9px;top:31.6px;width:0.9px;height:57px;background:#1f3654"></div>
<div style="position:absolute;left:509.9px;top:31.6px;width:0.9px;height:57px;background:#1f3654"></div>






<div class="f" style="left:4.1px;top:41.6px;width:78.6px;height:13.8px"></div>


<div class="f" style="left:4.1px;top:56.9px;width:78.6px;height:13.8px"></div>
<div class="b" style="left:39.7px;top:57.7px;width:42.2px;height:12.2px"></div>


<svg style="position:absolute;left:74.2px;top:62.4px" width="5" height="3.4" viewBox="0 0 5 3.4"><path d="M0.5 0.5L2.5 2.7L4.5 0.5" stroke="#fff" stroke-width="0.9" fill="none"/></svg>
<div class="f" style="left:4.1px;top:72.2px;width:78.6px;height:13.8px"></div>



<div class="f" style="left:84.3px;top:41.6px;width:78.4px;height:13.8px"></div>
<div class="b" style="left:119.7px;top:42.4px;width:42.2px;height:12.2px"></div>

<div style="position:absolute;left:120.9px;top:43.2px;width:5.6px;height:10.6px;background:linear-gradient(#2f78c6,#1a4f92);border-radius:1px"></div>

<div class="f" style="left:84.3px;top:56.9px;width:78.4px;height:13.8px"></div>


<div class="f" style="left:84.3px;top:72.2px;width:78.4px;height:13.8px"></div>


<div class="f" style="left:170.5px;top:41.6px;width:78.0px;height:13.8px"></div>


<div class="f" style="left:170.5px;top:56.9px;width:78.0px;height:13.8px"></div>
<div class="b" style="left:205.0px;top:57.7px;width:42.7px;height:12.2px"></div>



<div class="f" style="left:170.5px;top:72.2px;width:78.0px;height:13.8px"></div>
<div class="b" style="left:205.0px;top:73.0px;width:42.7px;height:12.2px"></div>



<div class="f" style="left:256.5px;top:41.6px;width:78.0px;height:13.8px"></div>
<div class="b" style="left:291.8px;top:42.4px;width:41.9px;height:12.2px"></div>

<div style="position:absolute;left:293.0px;top:43.2px;width:5.6px;height:10.6px;background:linear-gradient(#2f78c6,#1a4f92);border-radius:1px"></div>

<div class="f" style="left:342.8px;top:41.6px;width:78.0px;height:13.8px"></div>
<div class="b" style="left:378.0px;top:42.4px;width:42.0px;height:12.2px"></div>



<div class="f" style="left:342.8px;top:56.9px;width:78.0px;height:13.8px"></div>
<div class="b" style="left:378.0px;top:57.7px;width:42.0px;height:12.2px"></div>



<div class="f" style="left:342.8px;top:72.2px;width:78.0px;height:13.8px"></div>
<div class="b" style="left:378.0px;top:73.0px;width:42.0px;height:12.2px"></div>


<svg style="position:absolute;left:412.3px;top:77.7px" width="5" height="3.4" viewBox="0 0 5 3.4"><path d="M0.5 0.5L2.5 2.7L4.5 0.5" stroke="#fff" stroke-width="0.9" fill="none"/></svg>
<div class="f" style="left:428.8px;top:41.6px;width:78.0px;height:13.8px"></div>
<div class="b" style="left:464.0px;top:42.4px;width:42.0px;height:12.2px"></div>



<svg style="position:absolute;left:498.3px;top:47.1px" width="5" height="3.4" viewBox="0 0 5 3.4"><path d="M0.5 0.5L2.5 2.7L4.5 0.5" stroke="#fff" stroke-width="0.9" fill="none"/></svg>
<div class="f" style="left:428.8px;top:56.9px;width:78.0px;height:13.8px"></div>
<div class="b" style="left:464.0px;top:57.7px;width:42.0px;height:12.2px"></div>


<div class="f" style="left:428.8px;top:72.2px;width:78.0px;height:13.8px"></div>
<div class="b" style="left:464.0px;top:73.0px;width:42.0px;height:12.2px"></div>


<svg style="position:absolute;left:498.3px;top:77.7px" width="5" height="3.4" viewBox="0 0 5 3.4"><path d="M0.5 0.5L2.5 2.7L4.5 0.5" stroke="#fff" stroke-width="0.9" fill="none"/></svg>
<div class="f" style="left:514.6px;top:41.6px;width:78.0px;height:13.8px"></div>
<div class="b" style="left:551.0px;top:42.4px;width:40.8px;height:12.2px"></div>

<div style="position:absolute;left:585.6px;top:43.2px;width:5.6px;height:10.6px;background:linear-gradient(#2f78c6,#1a4f92);border-radius:1px"></div>

<div style="position:absolute;left:712.4px;top:90.6px;width:38px;height:18.4px;background:linear-gradient(#1a5596,#0a264e);border-radius:2.5px 0 0 2.5px"></div>



<div style="position:absolute;left:712.4px;top:110.6px;width:38px;height:20px;background:linear-gradient(#1a5596,#0a264e);border-radius:2.5px 0 0 2.5px"></div>

<svg style="position:absolute;left:742.6px;top:119px" width="5" height="3.4" viewBox="0 0 5 3.4"><path d="M0.5 0.5L2.5 2.7L4.5 0.5" stroke="#fff" stroke-width="0.9" fill="none"/></svg>



<div style="position:absolute;left:712.6px;top:151.6px;width:37.4px;height:0.8px;background:#3c3c3c"></div>



<div style="position:absolute;left:712.6px;top:172.2px;width:37.4px;height:0.8px;background:#3c3c3c"></div>



<div style="position:absolute;left:712.6px;top:192.7px;width:37.4px;height:0.8px;background:#3c3c3c"></div>



<div style="position:absolute;left:712.6px;top:213.3px;width:37.4px;height:0.8px;background:#3c3c3c"></div>



<div style="position:absolute;left:712.6px;top:233.9px;width:37.4px;height:0.8px;background:#3c3c3c"></div>



<div style="position:absolute;left:712.6px;top:254.5px;width:37.4px;height:0.8px;background:#3c3c3c"></div>



<div style="position:absolute;left:712.6px;top:275.1px;width:37.4px;height:0.8px;background:#3c3c3c"></div>



<div style="position:absolute;left:712.6px;top:295.6px;width:37.4px;height:0.8px;background:#3c3c3c"></div>



<div style="position:absolute;left:712.6px;top:316.2px;width:37.4px;height:0.8px;background:#3c3c3c"></div>



<div style="position:absolute;left:712.6px;top:336.8px;width:37.4px;height:0.8px;background:#3c3c3c"></div>
<div style="position:absolute;left:170.6px;top:233.2px;width:184.6px;height:158.4px;background:#f4f6f8;border-radius:4px;box-shadow:0 0 1.5px rgba(120,130,140,0.8)"></div>
<div style="position:absolute;left:173.2px;top:235.6px;width:179.6px;height:153.4px;background:linear-gradient(#0b1626,#050a14);border-radius:3.5px"></div>
<div style="position:absolute;left:176.4px;top:238.6px;width:173.4px;height:24.4px;background:linear-gradient(#1b5b96,#0f3f74)"></div>







<svg style="position:absolute;left:0;top:0;text-rendering:geometricPrecision;will-change:transform" width="750" height="422" viewBox="0 0 750 422"><text x="15.80" y="7.84" font-size="5.69" font-weight="400" fill="#d6e6f5" text-anchor="start" stroke="#d6e6f5" stroke-width="0.14">OmniPC - A26OL_SS53mm_270 1.odat</text><text x="13.20" y="23.65" font-size="5.45" font-weight="700" fill="#fff" text-anchor="start" stroke="#fff" stroke-width="0.18">OmniPC</text><text x="41.00" y="23.66" font-size="5.47" font-weight="700" fill="#fff" text-anchor="start" stroke="#fff" stroke-width="0.18">UT Settings</text><text x="77.80" y="23.66" font-size="5.47" font-weight="700" fill="#fff" text-anchor="start" stroke="#fff" stroke-width="0.18">Gates</text><text x="99.30" y="23.53" font-size="5.10" font-weight="700" fill="#fff" text-anchor="start" stroke="#fff" stroke-width="0.18">Scan</text><text x="117.80" y="23.72" font-size="5.65" font-weight="700" fill="#fff" text-anchor="start" stroke="#fff" stroke-width="0.18">Probe &amp; Part</text><text x="158.30" y="23.63" font-size="5.40" font-weight="700" fill="#fff" text-anchor="start" stroke="#fff" stroke-width="0.18">Focal Law</text><text x="191.30" y="23.73" font-size="5.67" font-weight="700" fill="#fff" text-anchor="start" stroke="#fff" stroke-width="0.18">Measurements</text><text x="238.30" y="23.57" font-size="5.23" font-weight="700" fill="#fff" text-anchor="start" stroke="#fff" stroke-width="0.18">Display</text><text x="263.50" y="23.71" font-size="5.61" font-weight="700" fill="#fff" text-anchor="start" stroke="#fff" stroke-width="0.18">Preferences</text><text x="302.00" y="23.62" font-size="5.35" font-weight="700" fill="#fff" text-anchor="start" stroke="#fff" stroke-width="0.18">Help</text><text x="660.80" y="23.53" font-size="6.51" font-weight="700" fill="#fff" text-anchor="start">HD</text><text x="672.60" y="23.36" font-size="6.04" font-weight="700" fill="#e0701e" text-anchor="start" stroke="#e0701e" stroke-width="0.18">S W</text><text x="687.60" y="23.20" font-size="5.59" font-weight="700" fill="#9ab32a" text-anchor="start" stroke="#9ab32a" stroke-width="0.18">TCG</text><text x="707.50" y="22.87" font-size="4.67" font-weight="400" fill="#f0f0f0" text-anchor="start" stroke="#f0f0f0" stroke-width="0.14">OmniPC 5.13.0 RC</text><text x="4.10" y="37.92" font-size="4.26" font-weight="400" fill="#d5dbe4" text-anchor="start" stroke="#d5dbe4" stroke-width="0.14">DATA SOURCE</text><text x="170.00" y="37.90" font-size="4.19" font-weight="400" fill="#d5dbe4" text-anchor="start" stroke="#d5dbe4" stroke-width="0.14">THICKNESS</text><text x="256.00" y="37.83" font-size="4.00" font-weight="400" fill="#d5dbe4" text-anchor="start" stroke="#d5dbe4" stroke-width="0.14">CURSORS</text><text x="342.60" y="37.83" font-size="4.00" font-weight="400" fill="#d5dbe4" text-anchor="start" stroke="#d5dbe4" stroke-width="0.14">GRID</text><text x="428.60" y="37.94" font-size="4.29" font-weight="400" fill="#d5dbe4" text-anchor="start" stroke="#d5dbe4" stroke-width="0.14">COMPLIANCE</text><text x="514.30" y="37.92" font-size="4.24" font-weight="400" fill="#d5dbe4" text-anchor="start" stroke="#d5dbe4" stroke-width="0.14">OVERLAY</text><text x="7.70" y="50.14" font-size="4.30" font-weight="400" fill="#ffffff" text-anchor="start" stroke="#ffffff" stroke-width="0.14">A-Scan</text><text x="76.10" y="50.43" font-size="5.10" font-weight="700" fill="#fff" text-anchor="end" stroke="#fff" stroke-width="0.18">Normal</text><text x="7.70" y="65.44" font-size="4.30" font-weight="400" fill="#ffffff" text-anchor="start" stroke="#ffffff" stroke-width="0.14">Primary C-Scan</text><text x="41.90" y="65.65" font-size="4.90" font-weight="700" fill="#fff" text-anchor="start" stroke="#fff" stroke-width="0.18">A%</text><text x="7.70" y="78.24" font-size="4.30" font-weight="400" fill="#ffffff" text-anchor="start" stroke="#ffffff" stroke-width="0.14">Secondary C-</text><text x="7.70" y="83.44" font-size="4.30" font-weight="400" fill="#ffffff" text-anchor="start" stroke="#ffffff" stroke-width="0.14">Scan</text><text x="76.10" y="81.03" font-size="5.10" font-weight="700" fill="#fff" text-anchor="end" stroke="#fff" stroke-width="0.18">Thickness</text><text x="87.90" y="50.14" font-size="4.30" font-weight="400" fill="#ffffff" text-anchor="start" stroke="#ffffff" stroke-width="0.14">Merged B-Scan</text><text x="144.20" y="50.32" font-size="4.80" font-weight="700" fill="#fff" text-anchor="middle" stroke="#fff" stroke-width="0.18">OFF</text><text x="87.90" y="65.44" font-size="4.30" font-weight="400" fill="#ffffff" text-anchor="start" stroke="#ffffff" stroke-width="0.14">First Beam</text><text x="156.10" y="65.73" font-size="5.10" font-weight="700" fill="#fff" text-anchor="end" stroke="#fff" stroke-width="0.18">30.0 °</text><text x="87.90" y="80.74" font-size="4.30" font-weight="400" fill="#ffffff" text-anchor="start" stroke="#ffffff" stroke-width="0.14">Last Beam</text><text x="156.10" y="81.03" font-size="5.10" font-weight="700" fill="#fff" text-anchor="end" stroke="#fff" stroke-width="0.18">88.0 °</text><text x="174.10" y="50.14" font-size="4.30" font-weight="400" fill="#ffffff" text-anchor="start" stroke="#ffffff" stroke-width="0.14">Mode</text><text x="241.90" y="50.43" font-size="5.10" font-weight="700" fill="#fff" text-anchor="end" stroke="#fff" stroke-width="0.18">A^</text><text x="174.10" y="65.44" font-size="4.30" font-weight="400" fill="#ffffff" text-anchor="start" stroke="#ffffff" stroke-width="0.14">Minimum</text><text x="245.90" y="65.70" font-size="4.20" font-weight="400" fill="#c8d4e4" text-anchor="end" stroke="#c8d4e4" stroke-width="0.14">mm</text><text x="237.50" y="65.65" font-size="4.90" font-weight="700" fill="#fff" text-anchor="end" stroke="#fff" stroke-width="0.18">14.50</text><text x="174.10" y="80.74" font-size="4.30" font-weight="400" fill="#ffffff" text-anchor="start" stroke="#ffffff" stroke-width="0.14">Maximum</text><text x="245.90" y="81.00" font-size="4.20" font-weight="400" fill="#c8d4e4" text-anchor="end" stroke="#c8d4e4" stroke-width="0.14">mm</text><text x="237.50" y="80.95" font-size="4.90" font-weight="700" fill="#fff" text-anchor="end" stroke="#fff" stroke-width="0.18">60.90</text><text x="260.10" y="50.14" font-size="4.30" font-weight="400" fill="#ffffff" text-anchor="start" stroke="#ffffff" stroke-width="0.14">Values</text><text x="316.15" y="50.32" font-size="4.80" font-weight="700" fill="#fff" text-anchor="middle" stroke="#fff" stroke-width="0.18">OFF</text><text x="346.40" y="47.64" font-size="4.30" font-weight="400" fill="#ffffff" text-anchor="start" stroke="#ffffff" stroke-width="0.14">Ultrasound Cell</text><text x="346.40" y="52.84" font-size="4.30" font-weight="400" fill="#ffffff" text-anchor="start" stroke="#ffffff" stroke-width="0.14">Qty.</text><text x="415.20" y="50.35" font-size="4.90" font-weight="700" fill="#fff" text-anchor="end" stroke="#fff" stroke-width="0.18">10</text><text x="346.40" y="62.94" font-size="4.30" font-weight="400" fill="#ffffff" text-anchor="start" stroke="#ffffff" stroke-width="0.14">Amplitude Cell</text><text x="346.40" y="68.14" font-size="4.30" font-weight="400" fill="#ffffff" text-anchor="start" stroke="#ffffff" stroke-width="0.14">Qty.</text><text x="415.20" y="65.65" font-size="4.90" font-weight="700" fill="#fff" text-anchor="end" stroke="#fff" stroke-width="0.18">5</text><text x="346.40" y="80.74" font-size="4.30" font-weight="400" fill="#ffffff" text-anchor="start" stroke="#ffffff" stroke-width="0.14">Color</text><text x="380.20" y="80.95" font-size="4.90" font-weight="700" fill="#fff" text-anchor="start" stroke="#fff" stroke-width="0.18">Blue</text><text x="432.40" y="47.64" font-size="4.30" font-weight="400" fill="#ffffff" text-anchor="start" stroke="#ffffff" stroke-width="0.14">TCG</text><text x="432.40" y="52.84" font-size="4.30" font-weight="400" fill="#ffffff" text-anchor="start" stroke="#ffffff" stroke-width="0.14">Compliance</text><text x="466.20" y="50.35" font-size="4.90" font-weight="700" fill="#fff" text-anchor="start" stroke="#fff" stroke-width="0.18">Custom</text><text x="432.40" y="65.44" font-size="4.30" font-weight="400" fill="#ffffff" text-anchor="start" stroke="#ffffff" stroke-width="0.14">Curve Qty</text><text x="501.20" y="65.65" font-size="4.90" font-weight="700" fill="#fff" text-anchor="end" stroke="#fff" stroke-width="0.18">1</text><text x="432.40" y="80.74" font-size="4.30" font-weight="400" fill="#ffffff" text-anchor="start" stroke="#ffffff" stroke-width="0.14">Curve Id</text><text x="466.20" y="80.95" font-size="4.90" font-weight="700" fill="#fff" text-anchor="start" stroke="#fff" stroke-width="0.18">Sizing</text><text x="518.20" y="50.14" font-size="4.30" font-weight="400" fill="#ffffff" text-anchor="start" stroke="#ffffff" stroke-width="0.14">Multiple Legs</text><text x="568.60" y="50.32" font-size="4.80" font-weight="700" fill="#fff" text-anchor="middle" stroke="#fff" stroke-width="0.18">ON</text><text x="715.20" y="97.12" font-size="4.80" font-weight="400" fill="#f0f0f0" text-anchor="start" stroke="#f0f0f0" stroke-width="0.14">Scan</text><text x="746.80" y="104.95" font-size="4.60" font-weight="400" fill="#d0dae8" text-anchor="end" stroke="#d0dae8" stroke-width="0.14">mm</text><text x="737.40" y="104.90" font-size="5.30" font-weight="700" fill="#fff" text-anchor="end" stroke="#fff" stroke-width="0.18">713.83</text><text x="718.00" y="122.73" font-size="5.95" font-weight="400" fill="#fff" text-anchor="start" stroke="#fff" stroke-width="0.14">Custom</text><text x="715.40" y="138.98" font-size="4.70" font-weight="400" fill="#e8e8e8" text-anchor="start" stroke="#e8e8e8" stroke-width="0.14">A%</text><text transform="translate(729.40 147.99) scale(0.771 1)" font-size="6.40" font-weight="400" fill="#fff" text-anchor="end">98.5</text><text x="730.80" y="146.72" font-size="4.80" font-weight="400" fill="#ddd" text-anchor="start" stroke="#ddd" stroke-width="0.14">%</text><text x="715.40" y="159.56" font-size="4.70" font-weight="400" fill="#e8e8e8" text-anchor="start" stroke="#e8e8e8" stroke-width="0.14">DA^</text><text transform="translate(731.20 168.57) scale(0.900 1)" font-size="6.40" font-weight="400" fill="#fff" text-anchor="end">39.51</text><text transform="translate(733.00 168.51) scale(0.867 1)" font-size="5.40" font-weight="400" fill="#a8a8a8" text-anchor="start" stroke="#a8a8a8" stroke-width="0.14">mm</text><text x="715.40" y="180.14" font-size="4.70" font-weight="400" fill="#e8e8e8" text-anchor="start" stroke="#e8e8e8" stroke-width="0.14">PA^</text><text transform="translate(731.20 189.15) scale(0.900 1)" font-size="6.40" font-weight="400" fill="#fff" text-anchor="end">36.08</text><text transform="translate(733.00 189.09) scale(0.867 1)" font-size="5.40" font-weight="400" fill="#a8a8a8" text-anchor="start" stroke="#a8a8a8" stroke-width="0.14">mm</text><text x="715.40" y="200.72" font-size="4.70" font-weight="400" fill="#e8e8e8" text-anchor="start" stroke="#e8e8e8" stroke-width="0.14">SA^</text><text transform="translate(731.20 209.73) scale(0.900 1)" font-size="6.40" font-weight="400" fill="#fff" text-anchor="end">67.22</text><text transform="translate(733.00 209.67) scale(0.867 1)" font-size="5.40" font-weight="400" fill="#a8a8a8" text-anchor="start" stroke="#a8a8a8" stroke-width="0.14">mm</text><text x="715.40" y="221.30" font-size="4.70" font-weight="400" fill="#e8e8e8" text-anchor="start" stroke="#e8e8e8" stroke-width="0.14">VA^</text><text transform="translate(731.20 230.31) scale(0.900 1)" font-size="6.40" font-weight="400" fill="#fff" text-anchor="end">-1.08</text><text transform="translate(733.00 230.25) scale(0.867 1)" font-size="5.40" font-weight="400" fill="#a8a8a8" text-anchor="start" stroke="#a8a8a8" stroke-width="0.14">mm</text><text x="715.40" y="241.88" font-size="4.70" font-weight="400" fill="#e8e8e8" text-anchor="start" stroke="#e8e8e8" stroke-width="0.14">U(m-r)</text><text transform="translate(731.20 250.89) scale(0.900 1)" font-size="6.40" font-weight="400" fill="#fff" text-anchor="end">0.00</text><text transform="translate(733.00 250.83) scale(0.867 1)" font-size="5.40" font-weight="400" fill="#a8a8a8" text-anchor="start" stroke="#a8a8a8" stroke-width="0.14">mm</text><text x="715.40" y="262.46" font-size="4.70" font-weight="400" fill="#e8e8e8" text-anchor="start" stroke="#e8e8e8" stroke-width="0.14">I(m-r)</text><text transform="translate(731.20 271.47) scale(0.900 1)" font-size="6.40" font-weight="400" fill="#fff" text-anchor="end">0.00</text><text transform="translate(733.00 271.41) scale(0.867 1)" font-size="5.40" font-weight="400" fill="#a8a8a8" text-anchor="start" stroke="#a8a8a8" stroke-width="0.14">mm</text><text x="715.40" y="283.04" font-size="4.70" font-weight="400" fill="#e8e8e8" text-anchor="start" stroke="#e8e8e8" stroke-width="0.14">I·U(m-r)</text><text transform="translate(731.20 292.05) scale(0.900 1)" font-size="6.40" font-weight="400" fill="#fff" text-anchor="end">0.00</text><text transform="translate(733.00 291.99) scale(0.867 1)" font-size="5.40" font-weight="400" fill="#a8a8a8" text-anchor="start" stroke="#a8a8a8" stroke-width="0.14">mm</text><text x="715.40" y="303.62" font-size="4.70" font-weight="400" fill="#e8e8e8" text-anchor="start" stroke="#e8e8e8" stroke-width="0.14">I(m)</text><text transform="translate(731.20 312.63) scale(0.900 1)" font-size="6.40" font-weight="400" fill="#fff" text-anchor="end">0.00</text><text transform="translate(733.00 312.57) scale(0.867 1)" font-size="5.40" font-weight="400" fill="#a8a8a8" text-anchor="start" stroke="#a8a8a8" stroke-width="0.14">mm</text><text x="715.40" y="324.20" font-size="4.70" font-weight="400" fill="#e8e8e8" text-anchor="start" stroke="#e8e8e8" stroke-width="0.14">U(m)</text><text transform="translate(731.20 333.21) scale(0.900 1)" font-size="6.40" font-weight="400" fill="#fff" text-anchor="end">0.00</text><text transform="translate(733.00 333.15) scale(0.867 1)" font-size="5.40" font-weight="400" fill="#a8a8a8" text-anchor="start" stroke="#a8a8a8" stroke-width="0.14">mm</text><text x="186.00" y="255.85" font-size="13.00" font-weight="400" fill="#fff" text-anchor="start">Activate Merged B-Scan</text><text x="186.00" y="280.87" font-size="13.06" font-weight="400" fill="#fff" text-anchor="start">Set Data Cursor</text><text x="186.00" y="305.42" font-size="12.90" font-weight="400" fill="#fff" text-anchor="start">Set Reference Cursor</text><text x="186.00" y="330.36" font-size="13.30" font-weight="400" fill="#fff" text-anchor="start">Set Measurement Cursor</text><text x="186.00" y="355.08" font-size="13.06" font-weight="400" fill="#fff" text-anchor="start">Scan Offset</text><text x="186.00" y="380.31" font-size="13.15" font-weight="400" fill="#fff" text-anchor="start">Export All A-scans</text></svg>
<svg style="position:absolute;left:203.5px;top:250px" width="22" height="32" viewBox="0 0 22 32"><path d="M2.2 1.8 L2.2 23.4 L7.2 18.8 L11.2 28.4 L15 26.8 L11.1 17.6 L17.8 17.2 Z" fill="#fff" stroke="#0c1018" stroke-width="1.2" stroke-linejoin="round"/></svg>
</body></html>
